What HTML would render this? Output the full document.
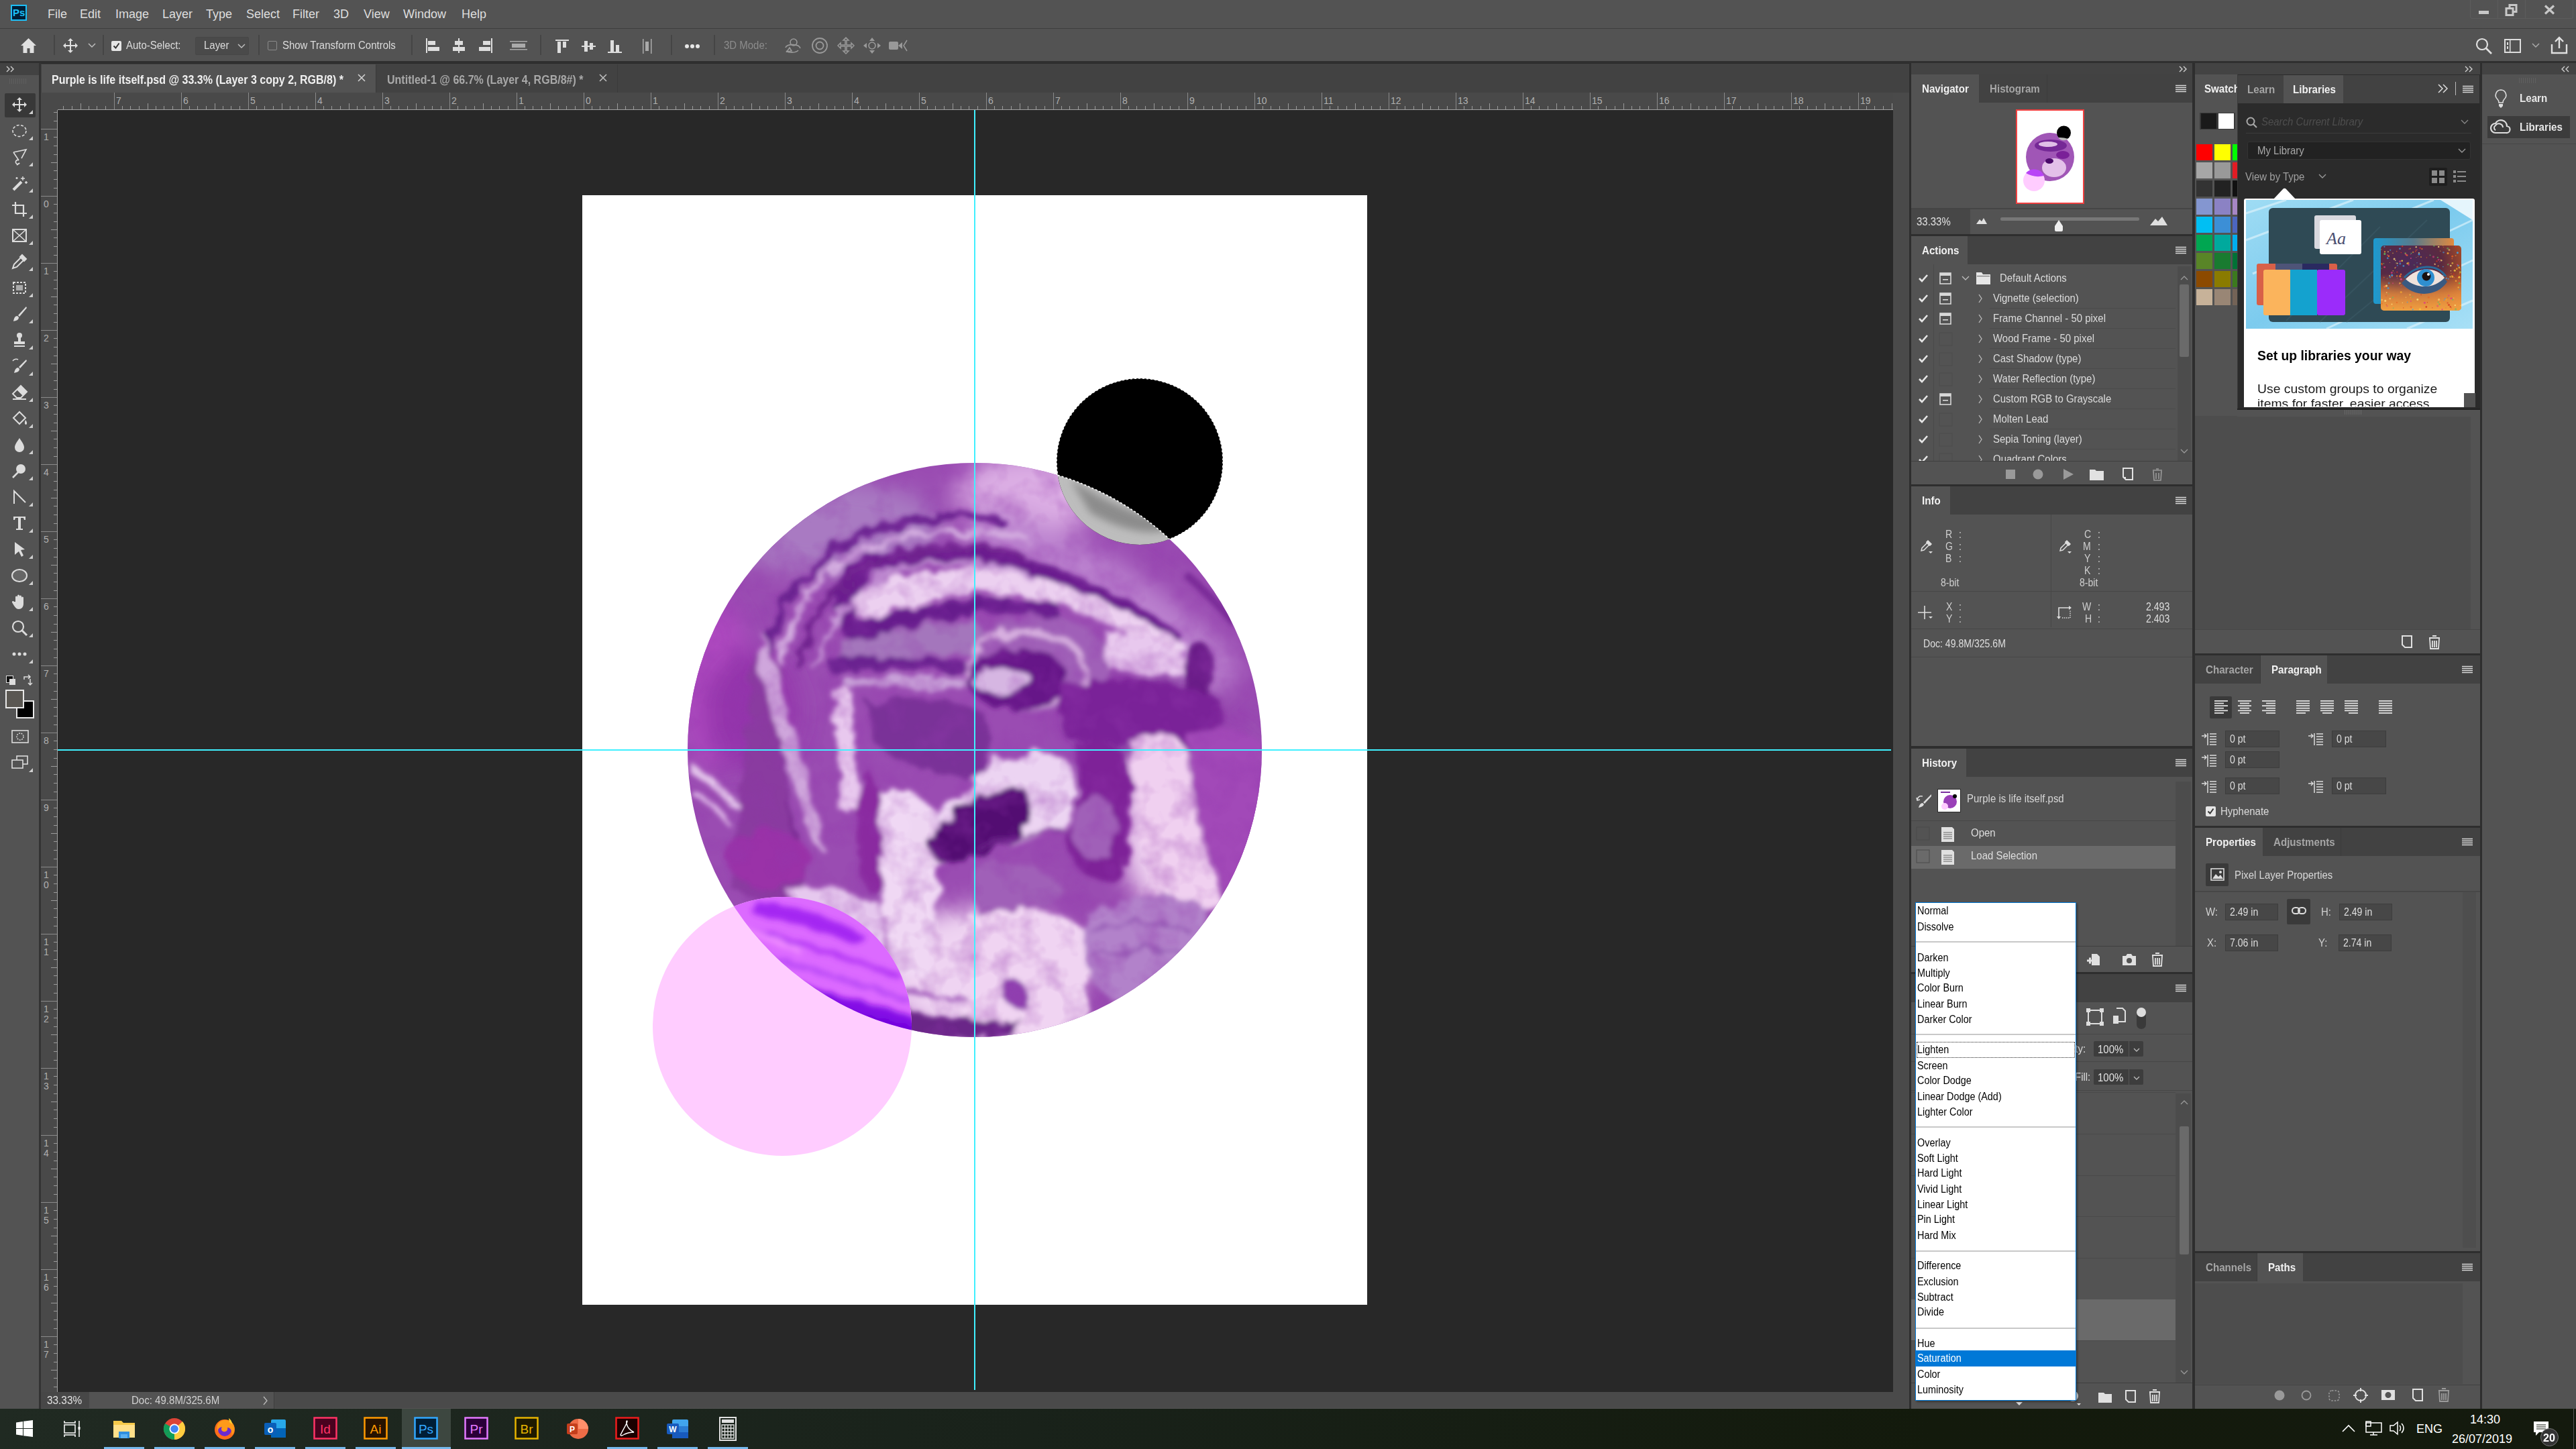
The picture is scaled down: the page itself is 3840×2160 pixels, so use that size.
<!DOCTYPE html><html><head><meta charset="utf-8"><style>
html,body{margin:0;padding:0;width:3840px;height:2160px;overflow:hidden;background:#535353;}
body{position:relative;font-family:"Liberation Sans",sans-serif;}
.a{position:absolute;}
.t{position:absolute;white-space:nowrap;line-height:1;transform-origin:0 0;}
svg{position:absolute;overflow:visible;}
</style></head><body>

<div class="a" style="left:0px;top:0px;width:3840px;height:42px;background:#535353;"></div>
<div class="a" style="left:0px;top:42px;width:3840px;height:1px;background:#3e3e3e;"></div>
<div class="a" style="left:16px;top:7px;width:24px;height:24px;background:#001e36;box-sizing:border-box;border:2px solid #1ec0f8;"></div>
<div class="t" style="left:19px;top:11px;font-size:15px;color:#1ec0f8;font-weight:bold;">Ps</div>
<div class="t" style="left:71px;top:12px;font-size:18px;color:#dedede;font-weight:normal;">File</div>
<div class="t" style="left:119px;top:12px;font-size:18px;color:#dedede;font-weight:normal;">Edit</div>
<div class="t" style="left:172px;top:12px;font-size:18px;color:#dedede;font-weight:normal;">Image</div>
<div class="t" style="left:242px;top:12px;font-size:18px;color:#dedede;font-weight:normal;">Layer</div>
<div class="t" style="left:307px;top:12px;font-size:18px;color:#dedede;font-weight:normal;">Type</div>
<div class="t" style="left:367px;top:12px;font-size:18px;color:#dedede;font-weight:normal;">Select</div>
<div class="t" style="left:436px;top:12px;font-size:18px;color:#dedede;font-weight:normal;">Filter</div>
<div class="t" style="left:497px;top:12px;font-size:18px;color:#dedede;font-weight:normal;">3D</div>
<div class="t" style="left:542px;top:12px;font-size:18px;color:#dedede;font-weight:normal;">View</div>
<div class="t" style="left:601px;top:12px;font-size:18px;color:#dedede;font-weight:normal;">Window</div>
<div class="t" style="left:688px;top:12px;font-size:18px;color:#dedede;font-weight:normal;">Help</div>
<div class="a" style="left:3682px;top:0px;width:154px;height:28px;box-sizing:border-box;border:1px solid #5c5c5c;border-top:none;border-radius:0 0 3px 3px;"></div>
<div class="a" style="left:3723px;top:0px;width:1px;height:27px;background:#5c5c5c;"></div>
<div class="a" style="left:3764px;top:0px;width:1px;height:27px;background:#5c5c5c;"></div>
<div class="a" style="left:3695px;top:16px;width:15px;height:5px;background:#c8c8c8;"></div>
<svg style="left:3734px;top:6px" width="20" height="18"><rect x="7" y="1.5" width="10" height="10" fill="none" stroke="#c8c8c8" stroke-width="3"/><rect x="2" y="6.5" width="10" height="10" fill="#535353" stroke="#c8c8c8" stroke-width="3"/></svg>
<svg style="left:3792px;top:7px" width="18" height="15"><path d="M2 1.5L15 13.5M15 1.5L2 13.5" stroke="#c8c8c8" stroke-width="3.2"/></svg>
<div class="a" style="left:0px;top:43px;width:3840px;height:48px;background:#535353;"></div>
<div class="a" style="left:0px;top:91px;width:3840px;height:3px;background:#2f2f2f;"></div>
<svg style="left:30px;top:56px" width="25" height="24"><path d="M12.5 1L1 12h3.5v11h6v-7h4v7h6V12H24z" fill="#e0e0e0"/></svg>
<div class="a" style="left:80px;top:52px;width:2px;height:30px;background:#454545;"></div>
<svg style="left:93px;top:56px" width="24" height="24"><path d="M12 1l-4 4h3v6H5V8l-4 4 4 4v-3h6v6H8l4 4 4-4h-3v-6h6v3l4-4-4-4v3h-6V5h3z" fill="#e0e0e0"/></svg>
<svg style="left:131px;top:64px" width="12" height="8"><path d="M1 1l5 5 5-5" fill="none" stroke="#bdbdbd" stroke-width="1.5"/></svg>
<div class="a" style="left:153px;top:52px;width:2px;height:30px;background:#454545;"></div>
<div class="a" style="left:166px;top:61px;width:15px;height:15px;background:#e6e6e6;border-radius:2px;"></div>
<svg style="left:168px;top:63px" width="11" height="11"><path d="M1.5 5.5l3 3 5-7" fill="none" stroke="#333" stroke-width="2"/></svg>
<div class="t" style="left:188px;top:59px;font-size:17px;color:#dcdcdc;font-weight:normal;transform:scaleX(0.88);">Auto-Select:</div>
<div class="a" style="left:291px;top:55px;width:80px;height:27px;background:#4a4a4a;border-radius:2px;box-sizing:border-box;border:1px solid #474747;"></div>
<div class="t" style="left:304px;top:59px;font-size:17px;color:#dcdcdc;font-weight:normal;transform:scaleX(0.88);">Layer</div>
<svg style="left:354px;top:65px" width="12" height="8"><path d="M1 1l5 5 5-5" fill="none" stroke="#bdbdbd" stroke-width="1.5"/></svg>
<div class="a" style="left:385px;top:52px;width:2px;height:30px;background:#454545;"></div>
<div class="a" style="left:399px;top:61px;width:14px;height:14px;box-sizing:border-box;border:1px solid #8a8a8a;border-radius:2px;"></div>
<div class="t" style="left:421px;top:59px;font-size:17px;color:#dcdcdc;font-weight:normal;transform:scaleX(0.88);">Show Transform Controls</div>
<div class="a" style="left:613px;top:52px;width:2px;height:30px;background:#454545;"></div>
<svg style="left:634px;top:56px" width="24" height="24"><rect x="1" y="1" width="2" height="22" fill="#ddd"/><rect x="4" y="5" width="11" height="6" fill="#ddd"/><rect x="4" y="14" width="17" height="6" fill="#ddd"/></svg>
<svg style="left:672px;top:56px" width="24" height="24"><rect x="11" y="1" width="2" height="22" fill="#ddd"/><rect x="6" y="5" width="12" height="6" fill="#ddd"/><rect x="3" y="14" width="18" height="6" fill="#ddd"/></svg>
<svg style="left:711px;top:56px" width="24" height="24"><rect x="21" y="1" width="2" height="22" fill="#ddd"/><rect x="9" y="5" width="11" height="6" fill="#ddd"/><rect x="3" y="14" width="17" height="6" fill="#ddd"/></svg>
<svg style="left:760px;top:60px" width="28" height="16"><rect x="0" y="1" width="26" height="1.5" fill="#aaa"/><rect x="3" y="5" width="20" height="6" fill="#aaa"/><rect x="0" y="13" width="26" height="1.5" fill="#aaa"/></svg>
<div class="a" style="left:805px;top:52px;width:2px;height:30px;background:#454545;"></div>
<svg style="left:828px;top:58px" width="22" height="22"><rect x="0" y="1" width="20" height="2" fill="#ddd"/><rect x="3" y="4" width="5" height="17" fill="#ddd"/><rect x="11" y="4" width="5" height="9" fill="#ddd"/></svg>
<svg style="left:867px;top:58px" width="22" height="22"><rect x="0" y="10" width="21" height="2" fill="#ddd"/><rect x="4" y="3" width="5" height="16" fill="#ddd"/><rect x="12" y="6" width="5" height="10" fill="#ddd"/></svg>
<svg style="left:906px;top:58px" width="22" height="22"><rect x="0" y="19" width="21" height="2" fill="#ddd"/><rect x="4" y="2" width="5" height="17" fill="#ddd"/><rect x="12" y="9" width="5" height="10" fill="#ddd"/></svg>
<svg style="left:958px;top:57px" width="14" height="24"><rect x="0" y="1" width="1.5" height="22" fill="#aaa"/><rect x="4" y="5" width="5" height="14" fill="#aaa"/><rect x="12" y="1" width="1.5" height="22" fill="#aaa"/></svg>
<div class="a" style="left:1000px;top:52px;width:2px;height:30px;background:#454545;"></div>
<div class="a" style="left:1021px;top:66px;width:6px;height:6px;background:#e6e6e6;border-radius:50%;"></div>
<div class="a" style="left:1029px;top:66px;width:6px;height:6px;background:#e6e6e6;border-radius:50%;"></div>
<div class="a" style="left:1037px;top:66px;width:6px;height:6px;background:#e6e6e6;border-radius:50%;"></div>
<div class="a" style="left:1064px;top:52px;width:2px;height:30px;background:#454545;"></div>
<div class="t" style="left:1079px;top:59px;font-size:17px;color:#8c8c8c;font-weight:normal;transform:scaleX(0.88);">3D Mode:</div>
<svg style="left:1168px;top:55px" width="28" height="26"><circle cx="15" cy="8" r="5" fill="none" stroke="#999" stroke-width="1.6"/><path d="M3 16c2-6 20-6 22 1M5 22l4-6 3 5z M22 20c-4 4-14 4-18 1" fill="none" stroke="#999" stroke-width="1.6"/></svg>
<svg style="left:1209px;top:55px" width="26" height="26"><circle cx="13" cy="13" r="11" fill="none" stroke="#999" stroke-width="1.8"/><circle cx="13" cy="13" r="5.5" fill="none" stroke="#999" stroke-width="1.8"/></svg>
<svg style="left:1248px;top:55px" width="26" height="26"><path d="M13 1l-4 4h3v7H5V9l-4 4 4 4v-3h7v7H9l4 4 4-4h-3v-7h7v3l4-4-4-4v3h-7V5h3z" fill="none" stroke="#999" stroke-width="1.5"/></svg>
<svg style="left:1286px;top:55px" width="28" height="26"><path d="M14 1l-4 5h8zM14 25l-4-5h8zM1 13l5-4v8zM27 13l-5-4v8z" fill="#999"/><circle cx="14" cy="13" r="5" fill="none" stroke="#999" stroke-width="1.6"/></svg>
<svg style="left:1325px;top:58px" width="28" height="20"><rect x="0" y="4" width="14" height="12" rx="2" fill="#999"/><path d="M14 10l6-5v10z" fill="#999"/><path d="M27 2l-5 8 5 8" fill="none" stroke="#999" stroke-width="1.5"/></svg>
<svg style="left:3690px;top:56px" width="26" height="26"><circle cx="10" cy="10" r="8" fill="none" stroke="#e0e0e0" stroke-width="2.2"/><path d="M16 16l8 8" stroke="#e0e0e0" stroke-width="2.6"/></svg>
<svg style="left:3733px;top:58px" width="26" height="22"><rect x="1" y="1" width="23" height="19" fill="none" stroke="#ddd" stroke-width="2"/><rect x="4" y="5" width="2" height="4" fill="#ddd"/><rect x="4" y="11" width="2" height="4" fill="#ddd"/><rect x="8" y="1" width="1.5" height="19" fill="#ddd"/></svg>
<svg style="left:3774px;top:64px" width="12" height="8"><path d="M1 1l5 5 5-5" fill="none" stroke="#aaa" stroke-width="1.5"/></svg>
<svg style="left:3802px;top:54px" width="26" height="27"><path d="M2 12v13h22V12" fill="none" stroke="#e0e0e0" stroke-width="2.4"/><path d="M13 18V3M7 8l6-6 6 6" fill="none" stroke="#e0e0e0" stroke-width="2.4"/></svg>
<div class="a" style="left:0px;top:94px;width:58px;height:2006px;background:#535353;"></div>
<div class="a" style="left:0px;top:94px;width:58px;height:18px;background:#424242;"></div>
<svg style="left:9px;top:98px" width="14" height="10"><path d="M1 1l4 4-4 4M7 1l4 4-4 4" fill="none" stroke="#d0d0d0" stroke-width="1.4"/></svg>
<div class="a" style="left:14px;top:117px;width:1px;height:8px;background:#5f5f5f;"></div>
<div class="a" style="left:17px;top:117px;width:1px;height:8px;background:#5f5f5f;"></div>
<div class="a" style="left:20px;top:117px;width:1px;height:8px;background:#5f5f5f;"></div>
<div class="a" style="left:23px;top:117px;width:1px;height:8px;background:#5f5f5f;"></div>
<div class="a" style="left:26px;top:117px;width:1px;height:8px;background:#5f5f5f;"></div>
<div class="a" style="left:29px;top:117px;width:1px;height:8px;background:#5f5f5f;"></div>
<div class="a" style="left:32px;top:117px;width:1px;height:8px;background:#5f5f5f;"></div>
<div class="a" style="left:35px;top:117px;width:1px;height:8px;background:#5f5f5f;"></div>
<div class="a" style="left:38px;top:117px;width:1px;height:8px;background:#5f5f5f;"></div>
<div class="a" style="left:58px;top:94px;width:3px;height:2006px;background:#333333;"></div>
<div class="a" style="left:7px;top:139px;width:46px;height:36px;background:#383838;border-radius:2px;"></div>
<svg style="left:17px;top:144px" width="24" height="24"><path d="M12 1l-4 4h3v6H5V8l-4 4 4 4v-3h6v6H8l4 4 4-4h-3v-6h6v3l4-4-4-4v3h-6V5h3z" fill="#dcdcdc"/></svg>
<svg style="left:43px;top:164px" width="6" height="6"><path d="M6 0V6H0z" fill="#cfcfcf"/></svg>
<svg style="left:17px;top:183px" width="24" height="24"><ellipse cx="12" cy="12" rx="10" ry="8.5" fill="none" stroke="#dcdcdc" stroke-width="1.6" stroke-dasharray="4 2.5"/></svg>
<svg style="left:43px;top:203px" width="6" height="6"><path d="M6 0V6H0z" fill="#cfcfcf"/></svg>
<svg style="left:17px;top:222px" width="24" height="24"><path d="M3 5l19-4-7 13M3 5l8 12M11 17a3 3 0 1 0 1 4l-4 3" fill="none" stroke="#dcdcdc" stroke-width="1.6"/></svg>
<svg style="left:43px;top:242px" width="6" height="6"><path d="M6 0V6H0z" fill="#cfcfcf"/></svg>
<svg style="left:17px;top:261px" width="24" height="24"><path d="M3 22l12-12" stroke="#dcdcdc" stroke-width="4"/><path d="M17 2v6M14 5h6M22 9v4M20 11h4M8 3v3M6.5 4.5h3" stroke="#dcdcdc" stroke-width="1.5"/></svg>
<svg style="left:43px;top:281px" width="6" height="6"><path d="M6 0V6H0z" fill="#cfcfcf"/></svg>
<svg style="left:17px;top:300px" width="24" height="24"><path d="M6 1v17h17M1 6h17v17" fill="none" stroke="#dcdcdc" stroke-width="2.2"/></svg>
<svg style="left:43px;top:320px" width="6" height="6"><path d="M6 0V6H0z" fill="#cfcfcf"/></svg>
<svg style="left:17px;top:339px" width="24" height="24"><rect x="2" y="3" width="20" height="18" fill="none" stroke="#dcdcdc" stroke-width="2"/><path d="M2 3l20 18M22 3L2 21" stroke="#dcdcdc" stroke-width="1.6"/></svg>
<svg style="left:43px;top:359px" width="6" height="6"><path d="M6 0V6H0z" fill="#cfcfcf"/></svg>
<svg style="left:17px;top:378px" width="24" height="24"><path d="M16 2l6 6-3 3-6-6zM14 6L4 16l-2 6 6-2 10-10" fill="none" stroke="#dcdcdc" stroke-width="2"/><path d="M16 2l6 6-3 3-6-6z" fill="#dcdcdc"/></svg>
<svg style="left:43px;top:398px" width="6" height="6"><path d="M6 0V6H0z" fill="#cfcfcf"/></svg>
<svg style="left:17px;top:417px" width="24" height="24"><rect x="3" y="4" width="18" height="16" fill="none" stroke="#dcdcdc" stroke-width="2" stroke-dasharray="3 2"/><rect x="7" y="8" width="10" height="8" fill="#aaa"/></svg>
<svg style="left:43px;top:437px" width="6" height="6"><path d="M6 0V6H0z" fill="#cfcfcf"/></svg>
<svg style="left:17px;top:456px" width="24" height="24"><path d="M22 1L10 14l2 2L23 3z" fill="#dcdcdc"/><path d="M9 15c-4 0-5 3-6 8 4-1 8-2 8-6z" fill="#dcdcdc"/></svg>
<svg style="left:43px;top:476px" width="6" height="6"><path d="M6 0V6H0z" fill="#cfcfcf"/></svg>
<svg style="left:17px;top:495px" width="24" height="24"><circle cx="12" cy="5" r="4" fill="#dcdcdc"/><path d="M10 8h4v6h6v4H4v-4h6z M4 20h16v2H4z" fill="#dcdcdc"/></svg>
<svg style="left:43px;top:515px" width="6" height="6"><path d="M6 0V6H0z" fill="#cfcfcf"/></svg>
<svg style="left:17px;top:534px" width="24" height="24"><path d="M22 2L11 13l2 2L23 4z" fill="#dcdcdc"/><path d="M10 14c-3 0-5 3-6 8 4-1 8-2 8-6z" fill="#dcdcdc"/><path d="M2 4a6 6 0 0 1 8-2" fill="none" stroke="#dcdcdc" stroke-width="1.5"/></svg>
<svg style="left:43px;top:554px" width="6" height="6"><path d="M6 0V6H0z" fill="#cfcfcf"/></svg>
<svg style="left:17px;top:573px" width="24" height="24"><path d="M14 2l9 9-9 9H8l-6-6z" fill="none" stroke="#dcdcdc" stroke-width="2"/><path d="M14 2l9 9-6 6-9-9z" fill="#dcdcdc"/><path d="M2 22h20" stroke="#dcdcdc" stroke-width="2"/></svg>
<svg style="left:43px;top:593px" width="6" height="6"><path d="M6 0V6H0z" fill="#cfcfcf"/></svg>
<svg style="left:17px;top:612px" width="24" height="24"><path d="M3 11l9-9 9 9-9 9z" fill="none" stroke="#dcdcdc" stroke-width="2"/><path d="M21 14c2 3 3 5 1 7-2 0-3-2-1-7z" fill="#dcdcdc"/></svg>
<svg style="left:43px;top:632px" width="6" height="6"><path d="M6 0V6H0z" fill="#cfcfcf"/></svg>
<svg style="left:17px;top:651px" width="24" height="24"><path d="M12 2c4 6 7 10 7 14a7 7 0 0 1-14 0c0-4 3-8 7-14z" fill="#dcdcdc"/></svg>
<svg style="left:43px;top:671px" width="6" height="6"><path d="M6 0V6H0z" fill="#cfcfcf"/></svg>
<svg style="left:17px;top:690px" width="24" height="24"><circle cx="14" cy="9" r="7" fill="#dcdcdc"/><path d="M10 14L2 22" stroke="#dcdcdc" stroke-width="2.5"/></svg>
<svg style="left:43px;top:710px" width="6" height="6"><path d="M6 0V6H0z" fill="#cfcfcf"/></svg>
<svg style="left:17px;top:729px" width="24" height="24"><path d="M4 22V3l17 17" fill="none" stroke="#dcdcdc" stroke-width="2"/></svg>
<svg style="left:43px;top:749px" width="6" height="6"><path d="M6 0V6H0z" fill="#cfcfcf"/></svg>
<svg style="left:17px;top:768px" width="24" height="24"><path d="M3 2h18v5h-2l-1-3h-4v16h3v2H7v-2h3V4H6L5 7H3z" fill="#dcdcdc"/></svg>
<svg style="left:43px;top:788px" width="6" height="6"><path d="M6 0V6H0z" fill="#cfcfcf"/></svg>
<svg style="left:17px;top:807px" width="24" height="24"><path d="M5 1l15 11-6 1 4 8-3 2-4-8-6 5z" fill="#dcdcdc"/></svg>
<svg style="left:43px;top:827px" width="6" height="6"><path d="M6 0V6H0z" fill="#cfcfcf"/></svg>
<svg style="left:17px;top:846px" width="24" height="24"><ellipse cx="12" cy="12" rx="11" ry="9" fill="#666" stroke="#dcdcdc" stroke-width="2"/></svg>
<svg style="left:43px;top:866px" width="6" height="6"><path d="M6 0V6H0z" fill="#cfcfcf"/></svg>
<svg style="left:17px;top:885px" width="24" height="24"><path d="M6 12V5a1.5 1.5 0 0 1 3 0v6V3a1.5 1.5 0 0 1 3 0v8V4a1.5 1.5 0 0 1 3 0v8V6a1.5 1.5 0 0 1 3 0v9c0 5-3 8-7 8-3 0-5-2-7-5l-3-5a1.5 1.5 0 0 1 3-1z" fill="#dcdcdc"/></svg>
<svg style="left:43px;top:905px" width="6" height="6"><path d="M6 0V6H0z" fill="#cfcfcf"/></svg>
<svg style="left:17px;top:924px" width="24" height="24"><circle cx="10" cy="10" r="8" fill="none" stroke="#dcdcdc" stroke-width="2.2"/><path d="M15 15l8 8" stroke="#dcdcdc" stroke-width="3"/></svg>
<svg style="left:43px;top:944px" width="6" height="6"><path d="M6 0V6H0z" fill="#cfcfcf"/></svg>
<svg style="left:17px;top:963px" width="24" height="24"><circle cx="4" cy="12" r="2.5" fill="#dcdcdc"/><circle cx="12" cy="12" r="2.5" fill="#dcdcdc"/><circle cx="20" cy="12" r="2.5" fill="#dcdcdc"/></svg>
<svg style="left:43px;top:983px" width="6" height="6"><path d="M6 0V6H0z" fill="#cfcfcf"/></svg>
<div class="a" style="left:9px;top:1007px;width:9px;height:9px;background:#111;border:1px solid #ddd;"></div>
<div class="a" style="left:14px;top:1012px;width:9px;height:9px;background:#ddd;"></div>
<svg style="left:33px;top:1006px" width="16" height="16"><path d="M3 7V3h9M9 0l3 3-3 3M12 6v9M9 12l3 3 3-3" fill="none" stroke="#dcdcdc" stroke-width="1.5"/></svg>
<div class="a" style="left:24px;top:1044px;width:27px;height:27px;background:#000;box-sizing:border-box;border:2px solid #e8e8e8;"></div>
<div class="a" style="left:8px;top:1028px;width:28px;height:28px;background:#5a5752;box-sizing:border-box;border:2px solid #e8e8e8;"></div>
<svg style="left:17px;top:1088px" width="26" height="20"><rect x="1" y="1" width="24" height="18" fill="none" stroke="#dcdcdc" stroke-width="1.6"/><circle cx="13" cy="10" r="5" fill="none" stroke="#dcdcdc" stroke-width="1.4" stroke-dasharray="2 1.5"/></svg>
<svg style="left:17px;top:1126px" width="26" height="22"><rect x="8" y="1" width="16" height="12" fill="none" stroke="#dcdcdc" stroke-width="1.6"/><rect x="1" y="7" width="16" height="12" fill="#535353" stroke="#dcdcdc" stroke-width="1.6"/></svg>
<svg style="left:43px;top:1145px" width="6" height="6"><path d="M6 0V6H0z" fill="#cfcfcf"/></svg>
<div class="a" style="left:61px;top:94px;width:2785px;height:1px;background:#2a2a2a;"></div>
<div class="a" style="left:61px;top:95px;width:2785px;height:43px;background:#424242;"></div>
<div class="a" style="left:62px;top:96px;width:498px;height:42px;background:#535353;"></div>
<div class="t" style="left:77px;top:110px;font-size:18px;color:#f0f0f0;font-weight:bold;transform:scaleX(0.89);">Purple is life itself.psd @ 33.3% (Layer 3 copy 2, RGB/8) *</div>
<svg style="left:533px;top:110px" width="12" height="12"><path d="M1 1l10 10M11 1L1 11" stroke="#d0d0d0" stroke-width="1.6"/></svg>
<div class="a" style="left:560px;top:96px;width:1px;height:42px;background:#3a3a3a;"></div>
<div class="t" style="left:577px;top:110px;font-size:18px;color:#a8a8a8;font-weight:bold;transform:scaleX(0.89);">Untitled-1 @ 66.7% (Layer 4, RGB/8#) *</div>
<svg style="left:893px;top:110px" width="12" height="12"><path d="M1 1l10 10M11 1L1 11" stroke="#bdbdbd" stroke-width="1.6"/></svg>
<div class="a" style="left:920px;top:96px;width:1px;height:42px;background:#3a3a3a;"></div>
<div class="a" style="left:61px;top:138px;width:2761px;height:26px;background:#494949;"></div>
<div class="a" style="left:61px;top:164px;width:25px;height:1911px;background:#494949;"></div>
<div class="a" style="left:86px;top:163px;width:2736px;height:1px;background:#a0a0a0;"></div>
<div class="a" style="left:85px;top:164px;width:1px;height:1911px;background:#a0a0a0;"></div>
<svg style="left:86px;top:138px" width="2736" height="26"><rect x="8" y="20" width="1" height="5" fill="#9a9a9a"/><rect x="21" y="20" width="1" height="5" fill="#9a9a9a"/><rect x="34" y="16" width="1" height="9" fill="#9a9a9a"/><rect x="46" y="20" width="1" height="5" fill="#9a9a9a"/><rect x="58" y="20" width="1" height="5" fill="#9a9a9a"/><rect x="71" y="20" width="1" height="5" fill="#9a9a9a"/><rect x="84" y="0" width="1" height="25" fill="#8a8a8a"/><rect x="96" y="20" width="1" height="5" fill="#9a9a9a"/><rect x="108" y="20" width="1" height="5" fill="#9a9a9a"/><rect x="121" y="20" width="1" height="5" fill="#9a9a9a"/><rect x="134" y="16" width="1" height="9" fill="#9a9a9a"/><rect x="146" y="20" width="1" height="5" fill="#9a9a9a"/><rect x="158" y="20" width="1" height="5" fill="#9a9a9a"/><rect x="171" y="20" width="1" height="5" fill="#9a9a9a"/><rect x="184" y="0" width="1" height="25" fill="#8a8a8a"/><rect x="196" y="20" width="1" height="5" fill="#9a9a9a"/><rect x="208" y="20" width="1" height="5" fill="#9a9a9a"/><rect x="221" y="20" width="1" height="5" fill="#9a9a9a"/><rect x="234" y="16" width="1" height="9" fill="#9a9a9a"/><rect x="246" y="20" width="1" height="5" fill="#9a9a9a"/><rect x="258" y="20" width="1" height="5" fill="#9a9a9a"/><rect x="271" y="20" width="1" height="5" fill="#9a9a9a"/><rect x="284" y="0" width="1" height="25" fill="#8a8a8a"/><rect x="296" y="20" width="1" height="5" fill="#9a9a9a"/><rect x="308" y="20" width="1" height="5" fill="#9a9a9a"/><rect x="321" y="20" width="1" height="5" fill="#9a9a9a"/><rect x="334" y="16" width="1" height="9" fill="#9a9a9a"/><rect x="346" y="20" width="1" height="5" fill="#9a9a9a"/><rect x="358" y="20" width="1" height="5" fill="#9a9a9a"/><rect x="371" y="20" width="1" height="5" fill="#9a9a9a"/><rect x="384" y="0" width="1" height="25" fill="#8a8a8a"/><rect x="396" y="20" width="1" height="5" fill="#9a9a9a"/><rect x="408" y="20" width="1" height="5" fill="#9a9a9a"/><rect x="421" y="20" width="1" height="5" fill="#9a9a9a"/><rect x="434" y="16" width="1" height="9" fill="#9a9a9a"/><rect x="446" y="20" width="1" height="5" fill="#9a9a9a"/><rect x="458" y="20" width="1" height="5" fill="#9a9a9a"/><rect x="471" y="20" width="1" height="5" fill="#9a9a9a"/><rect x="484" y="0" width="1" height="25" fill="#8a8a8a"/><rect x="496" y="20" width="1" height="5" fill="#9a9a9a"/><rect x="508" y="20" width="1" height="5" fill="#9a9a9a"/><rect x="521" y="20" width="1" height="5" fill="#9a9a9a"/><rect x="534" y="16" width="1" height="9" fill="#9a9a9a"/><rect x="546" y="20" width="1" height="5" fill="#9a9a9a"/><rect x="558" y="20" width="1" height="5" fill="#9a9a9a"/><rect x="571" y="20" width="1" height="5" fill="#9a9a9a"/><rect x="584" y="0" width="1" height="25" fill="#8a8a8a"/><rect x="596" y="20" width="1" height="5" fill="#9a9a9a"/><rect x="608" y="20" width="1" height="5" fill="#9a9a9a"/><rect x="621" y="20" width="1" height="5" fill="#9a9a9a"/><rect x="634" y="16" width="1" height="9" fill="#9a9a9a"/><rect x="646" y="20" width="1" height="5" fill="#9a9a9a"/><rect x="658" y="20" width="1" height="5" fill="#9a9a9a"/><rect x="671" y="20" width="1" height="5" fill="#9a9a9a"/><rect x="684" y="0" width="1" height="25" fill="#8a8a8a"/><rect x="696" y="20" width="1" height="5" fill="#9a9a9a"/><rect x="708" y="20" width="1" height="5" fill="#9a9a9a"/><rect x="721" y="20" width="1" height="5" fill="#9a9a9a"/><rect x="734" y="16" width="1" height="9" fill="#9a9a9a"/><rect x="746" y="20" width="1" height="5" fill="#9a9a9a"/><rect x="758" y="20" width="1" height="5" fill="#9a9a9a"/><rect x="771" y="20" width="1" height="5" fill="#9a9a9a"/><rect x="784" y="0" width="1" height="25" fill="#8a8a8a"/><rect x="796" y="20" width="1" height="5" fill="#9a9a9a"/><rect x="808" y="20" width="1" height="5" fill="#9a9a9a"/><rect x="821" y="20" width="1" height="5" fill="#9a9a9a"/><rect x="834" y="16" width="1" height="9" fill="#9a9a9a"/><rect x="846" y="20" width="1" height="5" fill="#9a9a9a"/><rect x="858" y="20" width="1" height="5" fill="#9a9a9a"/><rect x="871" y="20" width="1" height="5" fill="#9a9a9a"/><rect x="884" y="0" width="1" height="25" fill="#8a8a8a"/><rect x="896" y="20" width="1" height="5" fill="#9a9a9a"/><rect x="908" y="20" width="1" height="5" fill="#9a9a9a"/><rect x="921" y="20" width="1" height="5" fill="#9a9a9a"/><rect x="934" y="16" width="1" height="9" fill="#9a9a9a"/><rect x="946" y="20" width="1" height="5" fill="#9a9a9a"/><rect x="958" y="20" width="1" height="5" fill="#9a9a9a"/><rect x="971" y="20" width="1" height="5" fill="#9a9a9a"/><rect x="984" y="0" width="1" height="25" fill="#8a8a8a"/><rect x="996" y="20" width="1" height="5" fill="#9a9a9a"/><rect x="1008" y="20" width="1" height="5" fill="#9a9a9a"/><rect x="1021" y="20" width="1" height="5" fill="#9a9a9a"/><rect x="1034" y="16" width="1" height="9" fill="#9a9a9a"/><rect x="1046" y="20" width="1" height="5" fill="#9a9a9a"/><rect x="1058" y="20" width="1" height="5" fill="#9a9a9a"/><rect x="1071" y="20" width="1" height="5" fill="#9a9a9a"/><rect x="1084" y="0" width="1" height="25" fill="#8a8a8a"/><rect x="1096" y="20" width="1" height="5" fill="#9a9a9a"/><rect x="1108" y="20" width="1" height="5" fill="#9a9a9a"/><rect x="1121" y="20" width="1" height="5" fill="#9a9a9a"/><rect x="1134" y="16" width="1" height="9" fill="#9a9a9a"/><rect x="1146" y="20" width="1" height="5" fill="#9a9a9a"/><rect x="1158" y="20" width="1" height="5" fill="#9a9a9a"/><rect x="1171" y="20" width="1" height="5" fill="#9a9a9a"/><rect x="1184" y="0" width="1" height="25" fill="#8a8a8a"/><rect x="1196" y="20" width="1" height="5" fill="#9a9a9a"/><rect x="1208" y="20" width="1" height="5" fill="#9a9a9a"/><rect x="1221" y="20" width="1" height="5" fill="#9a9a9a"/><rect x="1234" y="16" width="1" height="9" fill="#9a9a9a"/><rect x="1246" y="20" width="1" height="5" fill="#9a9a9a"/><rect x="1258" y="20" width="1" height="5" fill="#9a9a9a"/><rect x="1271" y="20" width="1" height="5" fill="#9a9a9a"/><rect x="1284" y="0" width="1" height="25" fill="#8a8a8a"/><rect x="1296" y="20" width="1" height="5" fill="#9a9a9a"/><rect x="1308" y="20" width="1" height="5" fill="#9a9a9a"/><rect x="1321" y="20" width="1" height="5" fill="#9a9a9a"/><rect x="1334" y="16" width="1" height="9" fill="#9a9a9a"/><rect x="1346" y="20" width="1" height="5" fill="#9a9a9a"/><rect x="1358" y="20" width="1" height="5" fill="#9a9a9a"/><rect x="1371" y="20" width="1" height="5" fill="#9a9a9a"/><rect x="1384" y="0" width="1" height="25" fill="#8a8a8a"/><rect x="1396" y="20" width="1" height="5" fill="#9a9a9a"/><rect x="1408" y="20" width="1" height="5" fill="#9a9a9a"/><rect x="1421" y="20" width="1" height="5" fill="#9a9a9a"/><rect x="1434" y="16" width="1" height="9" fill="#9a9a9a"/><rect x="1446" y="20" width="1" height="5" fill="#9a9a9a"/><rect x="1458" y="20" width="1" height="5" fill="#9a9a9a"/><rect x="1471" y="20" width="1" height="5" fill="#9a9a9a"/><rect x="1484" y="0" width="1" height="25" fill="#8a8a8a"/><rect x="1496" y="20" width="1" height="5" fill="#9a9a9a"/><rect x="1508" y="20" width="1" height="5" fill="#9a9a9a"/><rect x="1521" y="20" width="1" height="5" fill="#9a9a9a"/><rect x="1534" y="16" width="1" height="9" fill="#9a9a9a"/><rect x="1546" y="20" width="1" height="5" fill="#9a9a9a"/><rect x="1558" y="20" width="1" height="5" fill="#9a9a9a"/><rect x="1571" y="20" width="1" height="5" fill="#9a9a9a"/><rect x="1584" y="0" width="1" height="25" fill="#8a8a8a"/><rect x="1596" y="20" width="1" height="5" fill="#9a9a9a"/><rect x="1608" y="20" width="1" height="5" fill="#9a9a9a"/><rect x="1621" y="20" width="1" height="5" fill="#9a9a9a"/><rect x="1634" y="16" width="1" height="9" fill="#9a9a9a"/><rect x="1646" y="20" width="1" height="5" fill="#9a9a9a"/><rect x="1658" y="20" width="1" height="5" fill="#9a9a9a"/><rect x="1671" y="20" width="1" height="5" fill="#9a9a9a"/><rect x="1684" y="0" width="1" height="25" fill="#8a8a8a"/><rect x="1696" y="20" width="1" height="5" fill="#9a9a9a"/><rect x="1708" y="20" width="1" height="5" fill="#9a9a9a"/><rect x="1721" y="20" width="1" height="5" fill="#9a9a9a"/><rect x="1734" y="16" width="1" height="9" fill="#9a9a9a"/><rect x="1746" y="20" width="1" height="5" fill="#9a9a9a"/><rect x="1758" y="20" width="1" height="5" fill="#9a9a9a"/><rect x="1771" y="20" width="1" height="5" fill="#9a9a9a"/><rect x="1784" y="0" width="1" height="25" fill="#8a8a8a"/><rect x="1796" y="20" width="1" height="5" fill="#9a9a9a"/><rect x="1808" y="20" width="1" height="5" fill="#9a9a9a"/><rect x="1821" y="20" width="1" height="5" fill="#9a9a9a"/><rect x="1834" y="16" width="1" height="9" fill="#9a9a9a"/><rect x="1846" y="20" width="1" height="5" fill="#9a9a9a"/><rect x="1858" y="20" width="1" height="5" fill="#9a9a9a"/><rect x="1871" y="20" width="1" height="5" fill="#9a9a9a"/><rect x="1884" y="0" width="1" height="25" fill="#8a8a8a"/><rect x="1896" y="20" width="1" height="5" fill="#9a9a9a"/><rect x="1908" y="20" width="1" height="5" fill="#9a9a9a"/><rect x="1921" y="20" width="1" height="5" fill="#9a9a9a"/><rect x="1934" y="16" width="1" height="9" fill="#9a9a9a"/><rect x="1946" y="20" width="1" height="5" fill="#9a9a9a"/><rect x="1958" y="20" width="1" height="5" fill="#9a9a9a"/><rect x="1971" y="20" width="1" height="5" fill="#9a9a9a"/><rect x="1984" y="0" width="1" height="25" fill="#8a8a8a"/><rect x="1996" y="20" width="1" height="5" fill="#9a9a9a"/><rect x="2008" y="20" width="1" height="5" fill="#9a9a9a"/><rect x="2021" y="20" width="1" height="5" fill="#9a9a9a"/><rect x="2034" y="16" width="1" height="9" fill="#9a9a9a"/><rect x="2046" y="20" width="1" height="5" fill="#9a9a9a"/><rect x="2058" y="20" width="1" height="5" fill="#9a9a9a"/><rect x="2071" y="20" width="1" height="5" fill="#9a9a9a"/><rect x="2084" y="0" width="1" height="25" fill="#8a8a8a"/><rect x="2096" y="20" width="1" height="5" fill="#9a9a9a"/><rect x="2108" y="20" width="1" height="5" fill="#9a9a9a"/><rect x="2121" y="20" width="1" height="5" fill="#9a9a9a"/><rect x="2134" y="16" width="1" height="9" fill="#9a9a9a"/><rect x="2146" y="20" width="1" height="5" fill="#9a9a9a"/><rect x="2158" y="20" width="1" height="5" fill="#9a9a9a"/><rect x="2171" y="20" width="1" height="5" fill="#9a9a9a"/><rect x="2184" y="0" width="1" height="25" fill="#8a8a8a"/><rect x="2196" y="20" width="1" height="5" fill="#9a9a9a"/><rect x="2208" y="20" width="1" height="5" fill="#9a9a9a"/><rect x="2221" y="20" width="1" height="5" fill="#9a9a9a"/><rect x="2234" y="16" width="1" height="9" fill="#9a9a9a"/><rect x="2246" y="20" width="1" height="5" fill="#9a9a9a"/><rect x="2258" y="20" width="1" height="5" fill="#9a9a9a"/><rect x="2271" y="20" width="1" height="5" fill="#9a9a9a"/><rect x="2284" y="0" width="1" height="25" fill="#8a8a8a"/><rect x="2296" y="20" width="1" height="5" fill="#9a9a9a"/><rect x="2308" y="20" width="1" height="5" fill="#9a9a9a"/><rect x="2321" y="20" width="1" height="5" fill="#9a9a9a"/><rect x="2334" y="16" width="1" height="9" fill="#9a9a9a"/><rect x="2346" y="20" width="1" height="5" fill="#9a9a9a"/><rect x="2358" y="20" width="1" height="5" fill="#9a9a9a"/><rect x="2371" y="20" width="1" height="5" fill="#9a9a9a"/><rect x="2384" y="0" width="1" height="25" fill="#8a8a8a"/><rect x="2396" y="20" width="1" height="5" fill="#9a9a9a"/><rect x="2408" y="20" width="1" height="5" fill="#9a9a9a"/><rect x="2421" y="20" width="1" height="5" fill="#9a9a9a"/><rect x="2434" y="16" width="1" height="9" fill="#9a9a9a"/><rect x="2446" y="20" width="1" height="5" fill="#9a9a9a"/><rect x="2458" y="20" width="1" height="5" fill="#9a9a9a"/><rect x="2471" y="20" width="1" height="5" fill="#9a9a9a"/><rect x="2484" y="0" width="1" height="25" fill="#8a8a8a"/><rect x="2496" y="20" width="1" height="5" fill="#9a9a9a"/><rect x="2508" y="20" width="1" height="5" fill="#9a9a9a"/><rect x="2521" y="20" width="1" height="5" fill="#9a9a9a"/><rect x="2534" y="16" width="1" height="9" fill="#9a9a9a"/><rect x="2546" y="20" width="1" height="5" fill="#9a9a9a"/><rect x="2558" y="20" width="1" height="5" fill="#9a9a9a"/><rect x="2571" y="20" width="1" height="5" fill="#9a9a9a"/><rect x="2584" y="0" width="1" height="25" fill="#8a8a8a"/><rect x="2596" y="20" width="1" height="5" fill="#9a9a9a"/><rect x="2608" y="20" width="1" height="5" fill="#9a9a9a"/><rect x="2621" y="20" width="1" height="5" fill="#9a9a9a"/><rect x="2634" y="16" width="1" height="9" fill="#9a9a9a"/><rect x="2646" y="20" width="1" height="5" fill="#9a9a9a"/><rect x="2658" y="20" width="1" height="5" fill="#9a9a9a"/><rect x="2671" y="20" width="1" height="5" fill="#9a9a9a"/><rect x="2684" y="0" width="1" height="25" fill="#8a8a8a"/><rect x="2696" y="20" width="1" height="5" fill="#9a9a9a"/><rect x="2708" y="20" width="1" height="5" fill="#9a9a9a"/><rect x="2721" y="20" width="1" height="5" fill="#9a9a9a"/><rect x="2734" y="16" width="1" height="9" fill="#9a9a9a"/><text x="87" y="17" font-size="14" fill="#b0b0b0" font-family="Liberation Sans">7</text><text x="187" y="17" font-size="14" fill="#b0b0b0" font-family="Liberation Sans">6</text><text x="287" y="17" font-size="14" fill="#b0b0b0" font-family="Liberation Sans">5</text><text x="387" y="17" font-size="14" fill="#b0b0b0" font-family="Liberation Sans">4</text><text x="487" y="17" font-size="14" fill="#b0b0b0" font-family="Liberation Sans">3</text><text x="587" y="17" font-size="14" fill="#b0b0b0" font-family="Liberation Sans">2</text><text x="687" y="17" font-size="14" fill="#b0b0b0" font-family="Liberation Sans">1</text><text x="787" y="17" font-size="14" fill="#b0b0b0" font-family="Liberation Sans">0</text><text x="887" y="17" font-size="14" fill="#b0b0b0" font-family="Liberation Sans">1</text><text x="987" y="17" font-size="14" fill="#b0b0b0" font-family="Liberation Sans">2</text><text x="1087" y="17" font-size="14" fill="#b0b0b0" font-family="Liberation Sans">3</text><text x="1187" y="17" font-size="14" fill="#b0b0b0" font-family="Liberation Sans">4</text><text x="1287" y="17" font-size="14" fill="#b0b0b0" font-family="Liberation Sans">5</text><text x="1387" y="17" font-size="14" fill="#b0b0b0" font-family="Liberation Sans">6</text><text x="1487" y="17" font-size="14" fill="#b0b0b0" font-family="Liberation Sans">7</text><text x="1587" y="17" font-size="14" fill="#b0b0b0" font-family="Liberation Sans">8</text><text x="1687" y="17" font-size="14" fill="#b0b0b0" font-family="Liberation Sans">9</text><text x="1787" y="17" font-size="14" fill="#b0b0b0" font-family="Liberation Sans">10</text><text x="1887" y="17" font-size="14" fill="#b0b0b0" font-family="Liberation Sans">11</text><text x="1987" y="17" font-size="14" fill="#b0b0b0" font-family="Liberation Sans">12</text><text x="2087" y="17" font-size="14" fill="#b0b0b0" font-family="Liberation Sans">13</text><text x="2187" y="17" font-size="14" fill="#b0b0b0" font-family="Liberation Sans">14</text><text x="2287" y="17" font-size="14" fill="#b0b0b0" font-family="Liberation Sans">15</text><text x="2387" y="17" font-size="14" fill="#b0b0b0" font-family="Liberation Sans">16</text><text x="2487" y="17" font-size="14" fill="#b0b0b0" font-family="Liberation Sans">17</text><text x="2587" y="17" font-size="14" fill="#b0b0b0" font-family="Liberation Sans">18</text><text x="2687" y="17" font-size="14" fill="#b0b0b0" font-family="Liberation Sans">19</text></svg>
<svg style="left:61px;top:164px" width="25" height="1911"><rect x="19" y="3" width="5" height="1" fill="#9a9a9a"/><rect x="19" y="16" width="5" height="1" fill="#9a9a9a"/><rect x="0" y="28" width="24" height="1" fill="#8a8a8a"/><rect x="19" y="40" width="5" height="1" fill="#9a9a9a"/><rect x="19" y="53" width="5" height="1" fill="#9a9a9a"/><rect x="19" y="66" width="5" height="1" fill="#9a9a9a"/><rect x="15" y="78" width="9" height="1" fill="#9a9a9a"/><rect x="19" y="90" width="5" height="1" fill="#9a9a9a"/><rect x="19" y="103" width="5" height="1" fill="#9a9a9a"/><rect x="19" y="116" width="5" height="1" fill="#9a9a9a"/><rect x="0" y="128" width="24" height="1" fill="#8a8a8a"/><rect x="19" y="140" width="5" height="1" fill="#9a9a9a"/><rect x="19" y="153" width="5" height="1" fill="#9a9a9a"/><rect x="19" y="166" width="5" height="1" fill="#9a9a9a"/><rect x="15" y="178" width="9" height="1" fill="#9a9a9a"/><rect x="19" y="190" width="5" height="1" fill="#9a9a9a"/><rect x="19" y="203" width="5" height="1" fill="#9a9a9a"/><rect x="19" y="216" width="5" height="1" fill="#9a9a9a"/><rect x="0" y="228" width="24" height="1" fill="#8a8a8a"/><rect x="19" y="240" width="5" height="1" fill="#9a9a9a"/><rect x="19" y="253" width="5" height="1" fill="#9a9a9a"/><rect x="19" y="266" width="5" height="1" fill="#9a9a9a"/><rect x="15" y="278" width="9" height="1" fill="#9a9a9a"/><rect x="19" y="290" width="5" height="1" fill="#9a9a9a"/><rect x="19" y="303" width="5" height="1" fill="#9a9a9a"/><rect x="19" y="316" width="5" height="1" fill="#9a9a9a"/><rect x="0" y="328" width="24" height="1" fill="#8a8a8a"/><rect x="19" y="340" width="5" height="1" fill="#9a9a9a"/><rect x="19" y="353" width="5" height="1" fill="#9a9a9a"/><rect x="19" y="366" width="5" height="1" fill="#9a9a9a"/><rect x="15" y="378" width="9" height="1" fill="#9a9a9a"/><rect x="19" y="390" width="5" height="1" fill="#9a9a9a"/><rect x="19" y="403" width="5" height="1" fill="#9a9a9a"/><rect x="19" y="416" width="5" height="1" fill="#9a9a9a"/><rect x="0" y="428" width="24" height="1" fill="#8a8a8a"/><rect x="19" y="440" width="5" height="1" fill="#9a9a9a"/><rect x="19" y="453" width="5" height="1" fill="#9a9a9a"/><rect x="19" y="466" width="5" height="1" fill="#9a9a9a"/><rect x="15" y="478" width="9" height="1" fill="#9a9a9a"/><rect x="19" y="490" width="5" height="1" fill="#9a9a9a"/><rect x="19" y="503" width="5" height="1" fill="#9a9a9a"/><rect x="19" y="516" width="5" height="1" fill="#9a9a9a"/><rect x="0" y="528" width="24" height="1" fill="#8a8a8a"/><rect x="19" y="540" width="5" height="1" fill="#9a9a9a"/><rect x="19" y="553" width="5" height="1" fill="#9a9a9a"/><rect x="19" y="566" width="5" height="1" fill="#9a9a9a"/><rect x="15" y="578" width="9" height="1" fill="#9a9a9a"/><rect x="19" y="590" width="5" height="1" fill="#9a9a9a"/><rect x="19" y="603" width="5" height="1" fill="#9a9a9a"/><rect x="19" y="616" width="5" height="1" fill="#9a9a9a"/><rect x="0" y="628" width="24" height="1" fill="#8a8a8a"/><rect x="19" y="640" width="5" height="1" fill="#9a9a9a"/><rect x="19" y="653" width="5" height="1" fill="#9a9a9a"/><rect x="19" y="666" width="5" height="1" fill="#9a9a9a"/><rect x="15" y="678" width="9" height="1" fill="#9a9a9a"/><rect x="19" y="690" width="5" height="1" fill="#9a9a9a"/><rect x="19" y="703" width="5" height="1" fill="#9a9a9a"/><rect x="19" y="716" width="5" height="1" fill="#9a9a9a"/><rect x="0" y="728" width="24" height="1" fill="#8a8a8a"/><rect x="19" y="740" width="5" height="1" fill="#9a9a9a"/><rect x="19" y="753" width="5" height="1" fill="#9a9a9a"/><rect x="19" y="766" width="5" height="1" fill="#9a9a9a"/><rect x="15" y="778" width="9" height="1" fill="#9a9a9a"/><rect x="19" y="790" width="5" height="1" fill="#9a9a9a"/><rect x="19" y="803" width="5" height="1" fill="#9a9a9a"/><rect x="19" y="816" width="5" height="1" fill="#9a9a9a"/><rect x="0" y="828" width="24" height="1" fill="#8a8a8a"/><rect x="19" y="840" width="5" height="1" fill="#9a9a9a"/><rect x="19" y="853" width="5" height="1" fill="#9a9a9a"/><rect x="19" y="866" width="5" height="1" fill="#9a9a9a"/><rect x="15" y="878" width="9" height="1" fill="#9a9a9a"/><rect x="19" y="890" width="5" height="1" fill="#9a9a9a"/><rect x="19" y="903" width="5" height="1" fill="#9a9a9a"/><rect x="19" y="916" width="5" height="1" fill="#9a9a9a"/><rect x="0" y="928" width="24" height="1" fill="#8a8a8a"/><rect x="19" y="940" width="5" height="1" fill="#9a9a9a"/><rect x="19" y="953" width="5" height="1" fill="#9a9a9a"/><rect x="19" y="966" width="5" height="1" fill="#9a9a9a"/><rect x="15" y="978" width="9" height="1" fill="#9a9a9a"/><rect x="19" y="990" width="5" height="1" fill="#9a9a9a"/><rect x="19" y="1003" width="5" height="1" fill="#9a9a9a"/><rect x="19" y="1016" width="5" height="1" fill="#9a9a9a"/><rect x="0" y="1028" width="24" height="1" fill="#8a8a8a"/><rect x="19" y="1040" width="5" height="1" fill="#9a9a9a"/><rect x="19" y="1053" width="5" height="1" fill="#9a9a9a"/><rect x="19" y="1066" width="5" height="1" fill="#9a9a9a"/><rect x="15" y="1078" width="9" height="1" fill="#9a9a9a"/><rect x="19" y="1090" width="5" height="1" fill="#9a9a9a"/><rect x="19" y="1103" width="5" height="1" fill="#9a9a9a"/><rect x="19" y="1116" width="5" height="1" fill="#9a9a9a"/><rect x="0" y="1128" width="24" height="1" fill="#8a8a8a"/><rect x="19" y="1140" width="5" height="1" fill="#9a9a9a"/><rect x="19" y="1153" width="5" height="1" fill="#9a9a9a"/><rect x="19" y="1166" width="5" height="1" fill="#9a9a9a"/><rect x="15" y="1178" width="9" height="1" fill="#9a9a9a"/><rect x="19" y="1190" width="5" height="1" fill="#9a9a9a"/><rect x="19" y="1203" width="5" height="1" fill="#9a9a9a"/><rect x="19" y="1216" width="5" height="1" fill="#9a9a9a"/><rect x="0" y="1228" width="24" height="1" fill="#8a8a8a"/><rect x="19" y="1240" width="5" height="1" fill="#9a9a9a"/><rect x="19" y="1253" width="5" height="1" fill="#9a9a9a"/><rect x="19" y="1266" width="5" height="1" fill="#9a9a9a"/><rect x="15" y="1278" width="9" height="1" fill="#9a9a9a"/><rect x="19" y="1290" width="5" height="1" fill="#9a9a9a"/><rect x="19" y="1303" width="5" height="1" fill="#9a9a9a"/><rect x="19" y="1316" width="5" height="1" fill="#9a9a9a"/><rect x="0" y="1328" width="24" height="1" fill="#8a8a8a"/><rect x="19" y="1340" width="5" height="1" fill="#9a9a9a"/><rect x="19" y="1353" width="5" height="1" fill="#9a9a9a"/><rect x="19" y="1366" width="5" height="1" fill="#9a9a9a"/><rect x="15" y="1378" width="9" height="1" fill="#9a9a9a"/><rect x="19" y="1390" width="5" height="1" fill="#9a9a9a"/><rect x="19" y="1403" width="5" height="1" fill="#9a9a9a"/><rect x="19" y="1416" width="5" height="1" fill="#9a9a9a"/><rect x="0" y="1428" width="24" height="1" fill="#8a8a8a"/><rect x="19" y="1440" width="5" height="1" fill="#9a9a9a"/><rect x="19" y="1453" width="5" height="1" fill="#9a9a9a"/><rect x="19" y="1466" width="5" height="1" fill="#9a9a9a"/><rect x="15" y="1478" width="9" height="1" fill="#9a9a9a"/><rect x="19" y="1490" width="5" height="1" fill="#9a9a9a"/><rect x="19" y="1503" width="5" height="1" fill="#9a9a9a"/><rect x="19" y="1516" width="5" height="1" fill="#9a9a9a"/><rect x="0" y="1528" width="24" height="1" fill="#8a8a8a"/><rect x="19" y="1540" width="5" height="1" fill="#9a9a9a"/><rect x="19" y="1553" width="5" height="1" fill="#9a9a9a"/><rect x="19" y="1566" width="5" height="1" fill="#9a9a9a"/><rect x="15" y="1578" width="9" height="1" fill="#9a9a9a"/><rect x="19" y="1590" width="5" height="1" fill="#9a9a9a"/><rect x="19" y="1603" width="5" height="1" fill="#9a9a9a"/><rect x="19" y="1616" width="5" height="1" fill="#9a9a9a"/><rect x="0" y="1628" width="24" height="1" fill="#8a8a8a"/><rect x="19" y="1640" width="5" height="1" fill="#9a9a9a"/><rect x="19" y="1653" width="5" height="1" fill="#9a9a9a"/><rect x="19" y="1666" width="5" height="1" fill="#9a9a9a"/><rect x="15" y="1678" width="9" height="1" fill="#9a9a9a"/><rect x="19" y="1690" width="5" height="1" fill="#9a9a9a"/><rect x="19" y="1703" width="5" height="1" fill="#9a9a9a"/><rect x="19" y="1716" width="5" height="1" fill="#9a9a9a"/><rect x="0" y="1728" width="24" height="1" fill="#8a8a8a"/><rect x="19" y="1740" width="5" height="1" fill="#9a9a9a"/><rect x="19" y="1753" width="5" height="1" fill="#9a9a9a"/><rect x="19" y="1766" width="5" height="1" fill="#9a9a9a"/><rect x="15" y="1778" width="9" height="1" fill="#9a9a9a"/><rect x="19" y="1790" width="5" height="1" fill="#9a9a9a"/><rect x="19" y="1803" width="5" height="1" fill="#9a9a9a"/><rect x="19" y="1816" width="5" height="1" fill="#9a9a9a"/><rect x="0" y="1828" width="24" height="1" fill="#8a8a8a"/><rect x="19" y="1840" width="5" height="1" fill="#9a9a9a"/><rect x="19" y="1853" width="5" height="1" fill="#9a9a9a"/><rect x="19" y="1866" width="5" height="1" fill="#9a9a9a"/><rect x="15" y="1878" width="9" height="1" fill="#9a9a9a"/><rect x="19" y="1890" width="5" height="1" fill="#9a9a9a"/><rect x="19" y="1903" width="5" height="1" fill="#9a9a9a"/><text x="4" y="45" font-size="14" fill="#b0b0b0" font-family="Liberation Sans">1</text><text x="4" y="145" font-size="14" fill="#b0b0b0" font-family="Liberation Sans">0</text><text x="4" y="245" font-size="14" fill="#b0b0b0" font-family="Liberation Sans">1</text><text x="4" y="345" font-size="14" fill="#b0b0b0" font-family="Liberation Sans">2</text><text x="4" y="445" font-size="14" fill="#b0b0b0" font-family="Liberation Sans">3</text><text x="4" y="545" font-size="14" fill="#b0b0b0" font-family="Liberation Sans">4</text><text x="4" y="645" font-size="14" fill="#b0b0b0" font-family="Liberation Sans">5</text><text x="4" y="745" font-size="14" fill="#b0b0b0" font-family="Liberation Sans">6</text><text x="4" y="845" font-size="14" fill="#b0b0b0" font-family="Liberation Sans">7</text><text x="4" y="945" font-size="14" fill="#b0b0b0" font-family="Liberation Sans">8</text><text x="4" y="1045" font-size="14" fill="#b0b0b0" font-family="Liberation Sans">9</text><text x="4" y="1145" font-size="14" fill="#b0b0b0" font-family="Liberation Sans">1</text><text x="4" y="1160" font-size="14" fill="#b0b0b0" font-family="Liberation Sans">0</text><text x="4" y="1245" font-size="14" fill="#b0b0b0" font-family="Liberation Sans">1</text><text x="4" y="1260" font-size="14" fill="#b0b0b0" font-family="Liberation Sans">1</text><text x="4" y="1345" font-size="14" fill="#b0b0b0" font-family="Liberation Sans">1</text><text x="4" y="1360" font-size="14" fill="#b0b0b0" font-family="Liberation Sans">2</text><text x="4" y="1445" font-size="14" fill="#b0b0b0" font-family="Liberation Sans">1</text><text x="4" y="1460" font-size="14" fill="#b0b0b0" font-family="Liberation Sans">3</text><text x="4" y="1545" font-size="14" fill="#b0b0b0" font-family="Liberation Sans">1</text><text x="4" y="1560" font-size="14" fill="#b0b0b0" font-family="Liberation Sans">4</text><text x="4" y="1645" font-size="14" fill="#b0b0b0" font-family="Liberation Sans">1</text><text x="4" y="1660" font-size="14" fill="#b0b0b0" font-family="Liberation Sans">5</text><text x="4" y="1745" font-size="14" fill="#b0b0b0" font-family="Liberation Sans">1</text><text x="4" y="1760" font-size="14" fill="#b0b0b0" font-family="Liberation Sans">6</text><text x="4" y="1845" font-size="14" fill="#b0b0b0" font-family="Liberation Sans">1</text><text x="4" y="1860" font-size="14" fill="#b0b0b0" font-family="Liberation Sans">7</text></svg>
<div class="a" style="left:86px;top:164px;width:2736px;height:1911px;background:#282828;"></div>
<div class="a" style="left:2822px;top:138px;width:24px;height:1961px;background:#4a4a4a;"></div>
<div class="a" style="left:2846px;top:94px;width:3px;height:2006px;background:#2e2e2e;"></div>
<div class="a" style="left:61px;top:2075px;width:2761px;height:24px;background:#4a4a4a;"></div>
<div class="a" style="left:61px;top:2075px;width:72px;height:24px;background:#474747;"></div>
<div class="a" style="left:133px;top:2075px;width:275px;height:24px;background:#535353;"></div>
<div class="t" style="left:70px;top:2080px;font-size:16px;color:#e0e0e0;font-weight:normal;transform:scaleX(0.96);">33.33%</div>
<div class="t" style="left:196px;top:2080px;font-size:16px;color:#d0d0d0;font-weight:normal;transform:scaleX(0.94);">Doc: 49.8M/325.6M</div>
<svg style="left:392px;top:2081px" width="8" height="14"><path d="M1 1l5 6-5 6" fill="none" stroke="#bbb" stroke-width="1.3"/></svg>
<div class="a" style="left:408px;top:2075px;width:1px;height:25px;background:#3e3e3e;"></div>
<div class="a" style="left:868px;top:291px;width:1170px;height:1654px;background:#ffffff;"></div>
<svg style="left:1025px;top:690px" width="856" height="856">
<defs>
<clipPath id="cpc"><circle cx="428" cy="428" r="428"/></clipPath>
<filter id="bl1" x="-50%" y="-50%" width="200%" height="200%"><feGaussianBlur stdDeviation="18"/></filter>
<filter id="bl2" x="-50%" y="-50%" width="200%" height="200%"><feTurbulence type="fractalNoise" baseFrequency="0.04" numOctaves="2" seed="3" result="n"/><feDisplacementMap in="SourceGraphic" in2="n" scale="26" result="d"/><feGaussianBlur in="d" stdDeviation="3.5"/></filter>
<filter id="mot" x="0" y="0" width="100%" height="100%"><feTurbulence type="fractalNoise" baseFrequency="0.025" numOctaves="3" seed="11" result="t"/><feColorMatrix in="t" type="matrix" values="0 0 0 0 0.29  0 0 0 0 0.04  0 0 0 0 0.42  0 0 0 -2.2 1.25" result="c"/><feComposite in="c" in2="SourceGraphic" operator="in"/></filter>
</defs>
<g clip-path="url(#cpc)">
<rect x="0" y="0" width="856" height="856" fill="#9a4cb2"/>
<g filter="url(#bl1)">
<ellipse cx="210" cy="95" rx="170" ry="70" fill="#a97ac2"/>
<ellipse cx="510" cy="45" rx="110" ry="60" fill="#dcaee4"/>
<path d="M430 90 C560 130 700 210 800 330" stroke="#bb82cf" stroke-width="70" fill="none"/>
<ellipse cx="40" cy="330" rx="55" ry="130" fill="#ae48c0"/>
<ellipse cx="95" cy="370" rx="70" ry="90" fill="#9434ac"/>
<ellipse cx="700" cy="540" rx="55" ry="120" fill="#eed0f0"/>
<ellipse cx="440" cy="760" rx="150" ry="100" fill="#efd4f2"/>
<ellipse cx="800" cy="520" rx="60" ry="120" fill="#a248b8"/>
<ellipse cx="680" cy="380" rx="110" ry="55" fill="#7a2098"/>
</g>
<g filter="url(#bl2)">
<path d="M236 262 C212 220 212 162 262 140 C322 118 430 122 520 148 C600 172 680 216 732 252 L724 268 C670 236 600 196 520 172 C430 148 330 144 280 160 C248 180 248 220 258 258Z" fill="#6a1e8e"/>
<path d="M248 213 C248 190 262 180 290 175 C340 165 400 158 428 155 C500 152 600 190 740 268 L732 290 C620 232 520 192 428 192 C380 200 320 216 280 230 C260 235 248 228 248 213Z" fill="#ecd0f0"/>
<path d="M238 246 C300 226 380 206 428 202 C470 199 520 206 562 216 L556 234 C500 224 460 222 428 224 C380 230 300 252 242 268Z" fill="#661a8c"/>
<path d="M232 268 C300 250 380 238 430 236 C445 250 448 270 440 282 C360 284 290 292 226 302Z" fill="#a476bc"/>
<path d="M208 292 C280 284 360 287 440 298 L440 318 C360 308 280 302 212 312Z" fill="#6a2090"/>
<path d="M236 322 C300 314 380 317 440 327 L440 342 C380 334 300 332 236 337Z" fill="#c8a0d8"/>
<path d="M120 350 C125 450 140 540 165 615" stroke="#74268e" stroke-width="30" fill="none"/>
<path d="M116 312 C130 180 220 100 358 82 C400 78 440 80 470 88" stroke="#6a2090" stroke-width="14" fill="none"/>
<path d="M140 300 C155 190 230 120 360 105 C420 100 470 104 510 115" stroke="#d4aee0" stroke-width="9" fill="none"/>
<path d="M165 305 C180 210 250 140 360 128 C420 122 470 128 500 140" stroke="#70228e" stroke-width="10" fill="none"/>
<path d="M190 310 C205 230 265 165 355 150 C420 145 470 152 515 172" stroke="#c89ad8" stroke-width="7" fill="none"/>
<ellipse cx="525" cy="300" rx="105" ry="72" fill="#a060b8"/>
<ellipse cx="505" cy="308" rx="88" ry="56" fill="none" stroke="#d8b0e0" stroke-width="9"/>
<ellipse cx="492" cy="322" rx="74" ry="46" fill="#661888"/>
<ellipse cx="470" cy="326" rx="46" ry="18" fill="#d6b6e2"/>
<path d="M618 250 C680 248 732 268 742 300 C732 322 680 318 628 306Z" fill="#e8c8ee"/>
<ellipse cx="762" cy="312" rx="24" ry="46" fill="#6a1a88"/>
<path d="M560 335 C620 315 720 322 792 352 C805 390 800 420 780 430 C700 420 620 420 565 410 C550 380 550 350 560 335Z" fill="#7a2098"/>
<path d="M738 162 C770 190 800 220 815 240" stroke="#7a2a98" stroke-width="12" fill="none"/>
<path d="M95 290 C115 280 132 290 135 310 C138 420 150 560 177 640 C140 660 80 650 60 630 C70 580 86 480 95 290Z" fill="#8a3aa0"/>
<ellipse cx="120" cy="590" rx="62" ry="42" fill="#9a30a8"/>
<path d="M8 458 C30 470 55 490 74 515" stroke="#e2c2ea" stroke-width="12" fill="none"/>
<path d="M5 490 C25 500 45 515 60 535" stroke="#dcb4e6" stroke-width="8" fill="none"/>
<path d="M114 255 C130 300 142 360 168 430 C182 480 196 530 204 576 C194 580 182 562 172 520 C152 460 124 380 106 300Z" fill="#cfa6dc"/>
<path d="M230 340 C236 400 240 460 242 520" stroke="#e8c8ee" stroke-width="26" fill="none"/>
<path d="M270 455 C290 490 298 560 290 640 C270 660 255 620 252 560 C250 510 258 470 270 455Z" fill="#8a2aa0"/>
<path d="M266 354 C320 346 390 352 440 372 C460 410 450 450 430 470 C380 472 320 450 280 420Z" fill="#7a3098"/>
<path d="M282 487 C320 480 350 500 372 520 C378 600 372 700 362 760 L302 760 C296 700 290 600 282 487Z" fill="#f0d8f4"/>
<path d="M430 470 C450 442 490 430 540 432 C570 435 580 460 576 500 C572 530 560 545 540 552 C500 562 460 568 430 578 C410 585 380 600 360 610 L350 540 C380 520 410 495 430 470Z" fill="#ecd4f2"/>
<path d="M325 515 C350 510 368 530 369 560 L369 610 C350 600 330 580 325 515Z" fill="#eed6f2"/>
<path d="M362 560 C380 525 430 492 480 482 C512 478 518 510 508 535 C490 568 430 592 388 598 C368 598 358 580 362 560Z" fill="#520e72"/>
<path d="M430 570 C470 562 520 552 565 545" stroke="#7a2a98" stroke-width="5" fill="none"/>
<path d="M578 420 C600 410 640 415 655 440 C665 500 662 580 642 622 C600 632 570 602 565 562 C585 520 590 460 578 420Z" fill="#7e2498"/>
<ellipse cx="608" cy="545" rx="34" ry="48" fill="#a060b8"/>
<path d="M662 420 C680 400 730 400 742 425 C752 500 772 580 795 650 C770 680 720 675 702 662 C682 600 662 500 662 420Z" fill="#f0d0f0"/>
<path d="M745 405 C780 390 840 395 856 420 L856 640 L800 640 C775 560 755 500 745 405Z" fill="#a248b8"/>
<path d="M580 692 C620 642 722 632 772 662 C782 722 742 792 682 814 C622 814 580 762 580 692Z" fill="#b282ca"/>
<path d="M600 700 C640 680 700 680 750 700M610 740 C650 720 710 720 745 735" stroke="#9a60b8" stroke-width="6" fill="none"/>
<path d="M428 600 C480 590 540 600 562 640 C540 672 480 666 428 672Z" fill="#a060b8"/>
<path d="M420 675 C470 660 550 662 585 690 C600 750 600 810 590 856 L420 856 C410 800 405 720 420 675Z" fill="#f0d4f2"/>
<path d="M470 768 C490 764 512 780 508 800 C500 816 480 810 472 800Z" fill="#9040b0"/>
<path d="M320 812 C380 830 440 836 500 828 L480 856 L330 856Z" fill="#6a2888"/>
<path d="M300 780 C340 790 380 800 420 800" stroke="#a868c0" stroke-width="6" fill="none"/>
<path d="M150 640 C200 630 250 640 290 660 C300 700 290 730 260 740 C220 720 180 690 150 640Z" fill="#e6c8ee"/>
</g>
<rect x="0" y="0" width="856" height="856" fill="#4a0a6a" filter="url(#mot)" opacity="0.35"/>
</g>
</svg>
<svg style="left:1575px;top:564px" width="248" height="248">
<defs>
<clipPath id="cpb"><circle cx="124" cy="124" r="124"/></clipPath>
<clipPath id="cpp"><circle cx="-122" cy="554" r="428"/></clipPath>
<filter id="bl4"><feGaussianBlur stdDeviation="6"/></filter>
</defs>
<g clip-path="url(#cpb)">
<rect width="248" height="248" fill="#000"/>
<g clip-path="url(#cpp)">
<rect width="250" height="250" fill="#bdbdbd"/>
<g filter="url(#bl4)"><path d="M20 150 C60 175 110 205 180 215 C160 240 100 230 50 200Z" fill="#8c8c8c"/><path d="M10 120 C40 140 80 160 120 165" stroke="#d0d0d0" stroke-width="10" fill="none"/></g>
</g>
</g>
</svg>
<svg style="left:1573px;top:562px" width="252" height="252">
<defs><mask id="antm"><rect width="300" height="300" fill="#fff"/><circle cx="-120" cy="556" r="427" fill="#000"/></mask></defs>
<g mask="url(#antm)"><circle cx="126" cy="126" r="124" fill="none" stroke="#fff" stroke-width="1.6" stroke-dasharray="3 3"/></g>
<g clip-path="url(#cpb2)"><circle cx="-120" cy="556" r="428" fill="none" stroke="#fff" stroke-width="1.6" stroke-dasharray="3 3"/></g>
<defs><clipPath id="cpb2"><circle cx="126" cy="126" r="124"/></clipPath></defs>
</svg>
<svg style="left:973px;top:1337px" width="386" height="386">
<defs>
<clipPath id="cpk"><circle cx="193" cy="193" r="193"/></clipPath>
<clipPath id="cpp2"><circle cx="480" cy="-219" r="428"/></clipPath>
<filter id="bl5" x="-20%" y="-20%" width="140%" height="140%"><feTurbulence type="fractalNoise" baseFrequency="0.05" numOctaves="2" seed="5" result="n"/><feDisplacementMap in="SourceGraphic" in2="n" scale="14" result="d"/><feGaussianBlur in="d" stdDeviation="4"/></filter>
</defs>
<g clip-path="url(#cpk)">
<rect width="386" height="386" fill="#ffccff"/>
<g clip-path="url(#cpp2)">
<rect width="386" height="386" fill="#dc6aff"/>
<g filter="url(#bl5)">
<path d="M160 8 C225 14 280 35 318 60 L302 72 C250 50 205 36 150 26Z" fill="#a426f2"/>
<path d="M110 40 C190 60 290 90 370 120" stroke="#b036f4" stroke-width="8" fill="none"/>
<path d="M150 85 C230 105 310 130 385 155" stroke="#b848f6" stroke-width="7" fill="none"/>
<path d="M60 25 C120 40 170 60 220 80" stroke="#ee88ff" stroke-width="10" fill="none"/>
<path d="M150 120 C240 148 320 170 400 192" stroke="#8410e6" stroke-width="22" fill="none"/>
<path d="M190 150 C260 172 330 190 400 205" stroke="#7000dc" stroke-width="20" fill="none"/>
</g>
</g>
</g>
</svg>
<div class="a" style="left:1452px;top:164px;width:2px;height:1908px;background:#40f0ff;"></div>
<div class="a" style="left:86px;top:1117px;width:2733px;height:2px;background:#40f0ff;"></div>
<div class="a" style="left:2849px;top:94px;width:419px;height:2006px;background:#535353;"></div>
<div class="a" style="left:3268px;top:94px;width:4px;height:2006px;background:#2e2e2e;"></div>
<div class="a" style="left:3272px;top:94px;width:425px;height:2006px;background:#535353;"></div>
<div class="a" style="left:3697px;top:94px;width:3px;height:2006px;background:#2e2e2e;"></div>
<div class="a" style="left:3700px;top:94px;width:140px;height:2006px;background:#535353;"></div>
<div class="a" style="left:2849px;top:94px;width:419px;height:17px;background:#434343;"></div>
<div class="a" style="left:3272px;top:94px;width:425px;height:17px;background:#434343;"></div>
<div class="a" style="left:3700px;top:94px;width:140px;height:17px;background:#434343;"></div>
<svg style="left:3248px;top:98px" width="13" height="10"><path d="M1 1l4 4-4 4M7 1l4 4-4 4" fill="none" stroke="#d0d0d0" stroke-width="1.4"/></svg>
<svg style="left:3674px;top:98px" width="13" height="10"><path d="M1 1l4 4-4 4M7 1l4 4-4 4" fill="none" stroke="#d0d0d0" stroke-width="1.4"/></svg>
<svg style="left:3818px;top:98px" width="13" height="10"><path d="M5 1L1 5l4 4M11 1L7 5l4 4" fill="none" stroke="#d0d0d0" stroke-width="1.4"/></svg>
<div class="a" style="left:2849px;top:111px;width:419px;height:42px;background:#424242;"></div>
<div class="a" style="left:2849px;top:111px;width:101px;height:42px;background:#535353;"></div>
<div class="t" style="left:2865px;top:124px;font-size:17px;color:#f2f2f2;font-weight:bold;transform:scaleX(0.89);">Navigator</div>
<div class="t" style="left:2966px;top:124px;font-size:17px;color:#a6a6a6;font-weight:bold;transform:scaleX(0.89);">Histogram</div>
<div class="a" style="left:3051px;top:111px;width:1px;height:42px;background:#3b3b3b;"></div>
<svg style="left:3243px;top:126px" width="17" height="13"><path d="M0 1.5h16M0 4.5h16M0 7.5h16M0 10.5h16" stroke="#d8d8d8" stroke-width="1.4"/></svg>
<div class="a" style="left:3005px;top:163px;width:102px;height:141px;background:#ffffff;box-sizing:border-box;border:2px solid #f04040;"></div>
<svg style="left:3007px;top:165px" width="98" height="137">
<defs><clipPath id="nvc"><circle cx="49" cy="69" r="36"/></clipPath></defs>
<g clip-path="url(#nvc)"><rect x="0" y="0" width="98" height="137" fill="#a056b6"/>
<ellipse cx="50" cy="52" rx="24" ry="9" fill="#6a1e8e" opacity="0.8"/>
<ellipse cx="46" cy="50" rx="14" ry="4" fill="#ecd0f0" opacity="0.9"/>
<ellipse cx="55" cy="85" rx="18" ry="14" fill="#efd4f2" opacity="0.85"/>
<ellipse cx="48" cy="75" rx="6" ry="4" fill="#4a0a6a"/>
<ellipse cx="68" cy="66" rx="10" ry="6" fill="#7a2098"/>
</g>
<circle cx="25" cy="104" r="16" fill="#ffccff"/>
<path d="M13 93 A16 16 0 0 1 40 97 A36 36 0 0 1 13 93z" fill="#b844f6"/>
<circle cx="69.5" cy="33" r="10.5" fill="#000"/>
<path d="M61 40 A10.5 10.5 0 0 0 76 42 A36 36 0 0 0 61 40z" fill="#bbb"/>
</svg>
<div class="a" style="left:2849px;top:310px;width:419px;height:2px;background:#454545;"></div>
<div class="a" style="left:2849px;top:312px;width:88px;height:37px;background:#474747;"></div>
<div class="t" style="left:2857px;top:322px;font-size:17px;color:#e0e0e0;font-weight:normal;transform:scaleX(0.88);">33.33%</div>
<svg style="left:2946px;top:325px" width="16" height="9"><path d="M0 9l5-7 3 3 3-5 5 9z" fill="#e0e0e0"/></svg>
<div class="a" style="left:2982px;top:324px;width:207px;height:5px;background:#777777;border-radius:2px;"></div>
<svg style="left:3063px;top:328px" width="12" height="17"><path d="M6 0L0 9v6a2 2 0 0 0 2 2h8a2 2 0 0 0 2-2V9z" fill="#eeeeee"/></svg>
<svg style="left:3205px;top:323px" width="26" height="13"><path d="M0 13l8-10 4 4 6-7 8 13z" fill="#e0e0e0"/></svg>
<div class="a" style="left:2849px;top:349px;width:419px;height:3px;background:#2e2e2e;"></div>
<div class="a" style="left:2849px;top:352px;width:419px;height:42px;background:#424242;"></div>
<div class="a" style="left:2849px;top:352px;width:84px;height:42px;background:#535353;"></div>
<div class="t" style="left:2865px;top:365px;font-size:17px;color:#f2f2f2;font-weight:bold;transform:scaleX(0.89);">Actions</div>
<svg style="left:3243px;top:367px" width="17" height="13"><path d="M0 1.5h16M0 4.5h16M0 7.5h16M0 10.5h16" stroke="#d8d8d8" stroke-width="1.4"/></svg>
<div class="a" style="left:2882px;top:394px;width:1px;height:293px;background:#4a4a4a;"></div>
<svg style="left:2849px;top:397px" width="400" height="290"><path d="M12 18l4 4 8-9" fill="none" stroke="#e6e6e6" stroke-width="2.6"/><rect x="43" y="10" width="16" height="16" fill="none" stroke="#d8d8d8" stroke-width="1.6"/><rect x="43" y="10" width="16" height="4" fill="#d8d8d8"/><rect x="47" y="19" width="8" height="1.6" fill="#d8d8d8"/><path d="M76 15l5 5 5-5" fill="none" stroke="#bbb" stroke-width="1.4"/><path d="M97 9h8l2 3h11v15h-21z" fill="#e6e6e6"/><rect x="98" y="14" width="19" height="1.2" fill="#777"/><path d="M12 48l4 4 8-9" fill="none" stroke="#e6e6e6" stroke-width="2.6"/><rect x="43" y="40" width="16" height="16" fill="none" stroke="#d8d8d8" stroke-width="1.6"/><rect x="43" y="40" width="16" height="4" fill="#d8d8d8"/><rect x="47" y="49" width="8" height="1.6" fill="#d8d8d8"/><path d="M101 42l4 6-4 6" fill="none" stroke="#bbb" stroke-width="1.3"/><rect x="117" y="62" width="277" height="1" fill="#4b4b4b"/><path d="M12 78l4 4 8-9" fill="none" stroke="#e6e6e6" stroke-width="2.6"/><rect x="43" y="70" width="16" height="16" fill="none" stroke="#d8d8d8" stroke-width="1.6"/><rect x="43" y="70" width="16" height="4" fill="#d8d8d8"/><rect x="47" y="79" width="8" height="1.6" fill="#d8d8d8"/><path d="M101 72l4 6-4 6" fill="none" stroke="#bbb" stroke-width="1.3"/><rect x="117" y="92" width="277" height="1" fill="#4b4b4b"/><path d="M12 108l4 4 8-9" fill="none" stroke="#e6e6e6" stroke-width="2.6"/><rect x="42" y="99" width="19" height="19" fill="none" stroke="#4c4c4c" stroke-width="1"/><path d="M101 102l4 6-4 6" fill="none" stroke="#bbb" stroke-width="1.3"/><rect x="117" y="122" width="277" height="1" fill="#4b4b4b"/><path d="M12 138l4 4 8-9" fill="none" stroke="#e6e6e6" stroke-width="2.6"/><rect x="42" y="129" width="19" height="19" fill="none" stroke="#4c4c4c" stroke-width="1"/><path d="M101 132l4 6-4 6" fill="none" stroke="#bbb" stroke-width="1.3"/><rect x="117" y="152" width="277" height="1" fill="#4b4b4b"/><path d="M12 168l4 4 8-9" fill="none" stroke="#e6e6e6" stroke-width="2.6"/><rect x="42" y="159" width="19" height="19" fill="none" stroke="#4c4c4c" stroke-width="1"/><path d="M101 162l4 6-4 6" fill="none" stroke="#bbb" stroke-width="1.3"/><rect x="117" y="182" width="277" height="1" fill="#4b4b4b"/><path d="M12 198l4 4 8-9" fill="none" stroke="#e6e6e6" stroke-width="2.6"/><rect x="43" y="190" width="16" height="16" fill="none" stroke="#d8d8d8" stroke-width="1.6"/><rect x="43" y="190" width="16" height="4" fill="#d8d8d8"/><rect x="47" y="199" width="8" height="1.6" fill="#d8d8d8"/><path d="M101 192l4 6-4 6" fill="none" stroke="#bbb" stroke-width="1.3"/><rect x="117" y="212" width="277" height="1" fill="#4b4b4b"/><path d="M12 228l4 4 8-9" fill="none" stroke="#e6e6e6" stroke-width="2.6"/><rect x="42" y="219" width="19" height="19" fill="none" stroke="#4c4c4c" stroke-width="1"/><path d="M101 222l4 6-4 6" fill="none" stroke="#bbb" stroke-width="1.3"/><rect x="117" y="242" width="277" height="1" fill="#4b4b4b"/><path d="M12 258l4 4 8-9" fill="none" stroke="#e6e6e6" stroke-width="2.6"/><rect x="42" y="249" width="19" height="19" fill="none" stroke="#4c4c4c" stroke-width="1"/><path d="M101 252l4 6-4 6" fill="none" stroke="#bbb" stroke-width="1.3"/><rect x="117" y="272" width="277" height="1" fill="#4b4b4b"/><path d="M12 288l4 4 8-9" fill="none" stroke="#e6e6e6" stroke-width="2.6"/><rect x="42" y="279" width="19" height="19" fill="none" stroke="#4c4c4c" stroke-width="1"/><path d="M101 282l4 6-4 6" fill="none" stroke="#bbb" stroke-width="1.3"/><rect x="117" y="302" width="277" height="1" fill="#4b4b4b"/></svg>
<div class="t" style="left:2981px;top:406px;font-size:17px;color:#dcdcdc;font-weight:normal;transform:scaleX(0.88);">Default Actions</div>
<div class="t" style="left:2971px;top:436px;font-size:17px;color:#dcdcdc;font-weight:normal;transform:scaleX(0.88);">Vignette (selection)</div>
<div class="t" style="left:2971px;top:466px;font-size:17px;color:#dcdcdc;font-weight:normal;transform:scaleX(0.88);">Frame Channel - 50 pixel</div>
<div class="t" style="left:2971px;top:496px;font-size:17px;color:#dcdcdc;font-weight:normal;transform:scaleX(0.88);">Wood Frame - 50 pixel</div>
<div class="t" style="left:2971px;top:526px;font-size:17px;color:#dcdcdc;font-weight:normal;transform:scaleX(0.88);">Cast Shadow (type)</div>
<div class="t" style="left:2971px;top:556px;font-size:17px;color:#dcdcdc;font-weight:normal;transform:scaleX(0.88);">Water Reflection (type)</div>
<div class="t" style="left:2971px;top:586px;font-size:17px;color:#dcdcdc;font-weight:normal;transform:scaleX(0.88);">Custom RGB to Grayscale</div>
<div class="t" style="left:2971px;top:616px;font-size:17px;color:#dcdcdc;font-weight:normal;transform:scaleX(0.88);">Molten Lead</div>
<div class="t" style="left:2971px;top:646px;font-size:17px;color:#dcdcdc;font-weight:normal;transform:scaleX(0.88);">Sepia Toning (layer)</div>
<div class="t" style="left:2971px;top:676px;font-size:17px;color:#dcdcdc;font-weight:normal;transform:scaleX(0.88);">Quadrant Colors</div>
<div class="a" style="left:3246px;top:397px;width:20px;height:290px;background:#4c4c4c;"></div>
<svg style="left:3250px;top:411px" width="12" height="7"><path d="M1 6l5-5 5 5" fill="none" stroke="#999" stroke-width="1.3"/></svg>
<div class="a" style="left:3249px;top:424px;width:14px;height:108px;background:#6a6a6a;border-radius:2px;"></div>
<svg style="left:3250px;top:669px" width="12" height="7"><path d="M1 1l5 5 5-5" fill="none" stroke="#999" stroke-width="1.3"/></svg>
<div class="a" style="left:2849px;top:687px;width:419px;height:1px;background:#3f3f3f;"></div>
<div class="a" style="left:2849px;top:688px;width:419px;height:35px;background:#535353;"></div>
<svg style="left:2995px;top:696px" width="240" height="22">
<rect x="7" y="4" width="14" height="14" fill="#9a9a9a" transform="translate(-12 0)"/>
<circle cx="43" cy="11" r="7.5" fill="#9a9a9a"/>
<path d="M81 3l15 8-15 8z" fill="#9a9a9a"/>
<path d="M120 4h8l2 2h11v14h-21z" fill="#e2e2e2"/>
<path d="M170 2h14v17h-10l-4-4z" fill="none" stroke="#e2e2e2" stroke-width="2"/><path d="M170 15h4v4" fill="#e2e2e2"/>
<path d="M214 5h14M219 3h4M215 6l1 14h10l1-14M219 9v9M223 9v9" fill="none" stroke="#9a9a9a" stroke-width="1.6"/>
</svg>
<div class="a" style="left:2849px;top:722px;width:419px;height:3px;background:#2e2e2e;"></div>
<div class="a" style="left:2849px;top:725px;width:419px;height:42px;background:#424242;"></div>
<div class="a" style="left:2849px;top:725px;width:58px;height:42px;background:#535353;"></div>
<div class="t" style="left:2865px;top:738px;font-size:17px;color:#f2f2f2;font-weight:bold;transform:scaleX(0.89);">Info</div>
<svg style="left:3243px;top:740px" width="17" height="13"><path d="M0 1.5h16M0 4.5h16M0 7.5h16M0 10.5h16" stroke="#d8d8d8" stroke-width="1.4"/></svg>
<div class="a" style="left:3057px;top:767px;width:1px;height:168px;background:#474747;"></div>
<div class="a" style="left:2849px;top:881px;width:419px;height:1px;background:#474747;"></div>
<svg style="left:2860px;top:805px" width="22" height="22"><path d="M14 1l5 5-2 2-1-1-8 8-4 1 1-4 8-8-1-1z" fill="none" stroke="#ddd" stroke-width="1.5"/><path d="M14 1l5 5-3 3-5-5z" fill="#ddd"/><path d="M15 17l3 3 3-3z" fill="#ddd"/></svg>
<svg style="left:3067px;top:805px" width="22" height="22"><path d="M14 1l5 5-2 2-1-1-8 8-4 1 1-4 8-8-1-1z" fill="none" stroke="#ddd" stroke-width="1.5"/><path d="M14 1l5 5-3 3-5-5z" fill="#ddd"/><path d="M15 17l3 3 3-3z" fill="#ddd"/></svg>
<div class="t" style="left:2900px;top:789px;font-size:16px;color:#cfcfcf;font-weight:normal;transform:scaleX(0.88);">R</div>
<div class="t" style="left:2920px;top:789px;font-size:16px;color:#cfcfcf;font-weight:normal;transform:scaleX(0.88);">:</div>
<div class="t" style="left:2900px;top:807px;font-size:16px;color:#cfcfcf;font-weight:normal;transform:scaleX(0.88);">G</div>
<div class="t" style="left:2920px;top:807px;font-size:16px;color:#cfcfcf;font-weight:normal;transform:scaleX(0.88);">:</div>
<div class="t" style="left:2900px;top:825px;font-size:16px;color:#cfcfcf;font-weight:normal;transform:scaleX(0.88);">B</div>
<div class="t" style="left:2920px;top:825px;font-size:16px;color:#cfcfcf;font-weight:normal;transform:scaleX(0.88);">:</div>
<div class="t" style="left:2893px;top:861px;font-size:16px;color:#cfcfcf;font-weight:normal;transform:scaleX(0.88);">8-bit</div>
<div class="t" style="left:3107px;top:789px;font-size:16px;color:#cfcfcf;font-weight:normal;transform:scaleX(0.88);">C</div>
<div class="t" style="left:3127px;top:789px;font-size:16px;color:#cfcfcf;font-weight:normal;transform:scaleX(0.88);">:</div>
<div class="t" style="left:3105px;top:807px;font-size:16px;color:#cfcfcf;font-weight:normal;transform:scaleX(0.88);">M</div>
<div class="t" style="left:3127px;top:807px;font-size:16px;color:#cfcfcf;font-weight:normal;transform:scaleX(0.88);">:</div>
<div class="t" style="left:3107px;top:825px;font-size:16px;color:#cfcfcf;font-weight:normal;transform:scaleX(0.88);">Y</div>
<div class="t" style="left:3127px;top:825px;font-size:16px;color:#cfcfcf;font-weight:normal;transform:scaleX(0.88);">:</div>
<div class="t" style="left:3107px;top:843px;font-size:16px;color:#cfcfcf;font-weight:normal;transform:scaleX(0.88);">K</div>
<div class="t" style="left:3127px;top:843px;font-size:16px;color:#cfcfcf;font-weight:normal;transform:scaleX(0.88);">:</div>
<div class="t" style="left:3100px;top:861px;font-size:16px;color:#cfcfcf;font-weight:normal;transform:scaleX(0.88);">8-bit</div>
<svg style="left:2859px;top:903px" width="24" height="22"><path d="M10 0v20M0 10h20" stroke="#ddd" stroke-width="1.6"/><path d="M16 16h6l-3 3z" fill="#ddd"/></svg>
<div class="t" style="left:2901px;top:897px;font-size:16px;color:#cfcfcf;font-weight:normal;transform:scaleX(0.88);">X</div>
<div class="t" style="left:2920px;top:897px;font-size:16px;color:#cfcfcf;font-weight:normal;transform:scaleX(0.88);">:</div>
<div class="t" style="left:2901px;top:915px;font-size:16px;color:#cfcfcf;font-weight:normal;transform:scaleX(0.88);">Y</div>
<div class="t" style="left:2920px;top:915px;font-size:16px;color:#cfcfcf;font-weight:normal;transform:scaleX(0.88);">:</div>
<svg style="left:3066px;top:901px" width="24" height="22"><path d="M3 21V5h17" fill="none" stroke="#ddd" stroke-width="1.6"/><path d="M18 2l4 3-4 3zM0 18l3 4 3-4z" fill="#ddd"/><path d="M8 20h12V9" fill="none" stroke="#ddd" stroke-width="1.4" stroke-dasharray="1.5 1.5"/></svg>
<div class="t" style="left:3104px;top:897px;font-size:16px;color:#cfcfcf;font-weight:normal;transform:scaleX(0.88);">W</div>
<div class="t" style="left:3127px;top:897px;font-size:16px;color:#cfcfcf;font-weight:normal;transform:scaleX(0.88);">:</div>
<div class="t" style="left:3108px;top:915px;font-size:16px;color:#cfcfcf;font-weight:normal;transform:scaleX(0.88);">H</div>
<div class="t" style="left:3127px;top:915px;font-size:16px;color:#cfcfcf;font-weight:normal;transform:scaleX(0.88);">:</div>
<div class="t" style="left:3199px;top:897px;font-size:16px;color:#dedede;font-weight:normal;transform:scaleX(0.88);">2.493</div>
<div class="t" style="left:3199px;top:915px;font-size:16px;color:#dedede;font-weight:normal;transform:scaleX(0.88);">2.403</div>
<div class="a" style="left:2849px;top:937px;width:419px;height:1px;background:#474747;"></div>
<div class="t" style="left:2867px;top:952px;font-size:16px;color:#dedede;font-weight:normal;transform:scaleX(0.88);">Doc: 49.8M/325.6M</div>
<div class="a" style="left:2849px;top:979px;width:419px;height:1px;background:#474747;"></div>
<div class="a" style="left:2849px;top:1112px;width:419px;height:4px;background:#2e2e2e;"></div>
<div class="a" style="left:2849px;top:1116px;width:419px;height:42px;background:#424242;"></div>
<div class="a" style="left:2849px;top:1116px;width:82px;height:42px;background:#535353;"></div>
<div class="t" style="left:2865px;top:1129px;font-size:17px;color:#f2f2f2;font-weight:bold;transform:scaleX(0.89);">History</div>
<svg style="left:3243px;top:1131px" width="17" height="13"><path d="M0 1.5h16M0 4.5h16M0 7.5h16M0 10.5h16" stroke="#d8d8d8" stroke-width="1.4"/></svg>
<div class="a" style="left:3243px;top:1165px;width:23px;height:245px;background:#4c4c4c;"></div>
<svg style="left:2856px;top:1183px" width="24" height="22"><path d="M23 1L11 13l2 2L23 4z" fill="#ddd"/><path d="M10 14c-3 0-5 3-6 7 4-1 7-2 8-5z" fill="#ddd"/><path d="M2 9c1-4 4-6 8-5M1 6l1 4 4-1" fill="none" stroke="#ddd" stroke-width="1.5"/></svg>
<div class="a" style="left:2888px;top:1176px;width:35px;height:35px;background:#ffffff;box-sizing:border-box;border:1px solid #2a2a2a;"></div>
<svg style="left:2890px;top:1178px" width="31" height="31"><circle cx="17" cy="17" r="10" fill="#9a40b8"/><circle cx="9" cy="24" r="5" fill="#ffccff"/><circle cx="24" cy="9" r="3" fill="#000"/><rect x="3" y="2" width="14" height="2" fill="#7a30a0"/></svg>
<div class="t" style="left:2932px;top:1182px;font-size:17px;color:#d6d6d6;font-weight:normal;transform:scaleX(0.88);">Purple is life itself.psd</div>
<div class="a" style="left:2849px;top:1223px;width:394px;height:1px;background:#474747;"></div>
<div class="a" style="left:2849px;top:1261px;width:394px;height:34px;background:#6a6a6a;"></div>
<svg style="left:2856px;top:1232px" width="60" height="24"><rect x="1" y="1" width="19" height="19" fill="none" stroke="#4a4a4a"/><path d="M38 1h16l3 3v19H38z" fill="#e0e0e0"/><path d="M41 9h13M41 12h13M41 15h13M41 18h13" stroke="#666" stroke-width="1"/></svg>
<div class="t" style="left:2938px;top:1233px;font-size:17px;color:#dedede;font-weight:normal;transform:scaleX(0.88);">Open</div>
<svg style="left:2856px;top:1266px" width="60" height="24"><rect x="1" y="1" width="19" height="19" fill="none" stroke="#4a4a4a"/><path d="M38 1h16l3 3v19H38z" fill="#e0e0e0"/><path d="M41 9h13M41 12h13M41 15h13M41 18h13" stroke="#666" stroke-width="1"/></svg>
<div class="t" style="left:2938px;top:1267px;font-size:17px;color:#dedede;font-weight:normal;transform:scaleX(0.88);">Load Selection</div>
<div class="a" style="left:2849px;top:1410px;width:419px;height:1px;background:#3f3f3f;"></div>
<svg style="left:3110px;top:1419px" width="140" height="22">
<path d="M8 3h8l4 4v13H8z" fill="#e0e0e0"/><path d="M1 13h9M5.5 8.5v9" stroke="#e0e0e0" stroke-width="3"/>
<path d="M54 6h5l2-3h6l2 3h5v14H54z" fill="#e0e0e0"/><circle cx="64" cy="13" r="4" fill="#535353"/>
<path d="M98 5h16M103 2h6M99 6l1 15h12l1-15M103 9v10M106 9v10M109 9v10" fill="none" stroke="#e0e0e0" stroke-width="1.8"/>
</svg>
<div class="a" style="left:2849px;top:1449px;width:419px;height:3px;background:#2e2e2e;"></div>
<div class="a" style="left:2849px;top:1452px;width:419px;height:42px;background:#424242;"></div>
<svg style="left:3243px;top:1467px" width="17" height="13"><path d="M0 1.5h16M0 4.5h16M0 7.5h16M0 10.5h16" stroke="#d8d8d8" stroke-width="1.4"/></svg>
<svg style="left:3110px;top:1500px" width="100" height="36">
<path d="M3 6h20v20H3z" fill="none" stroke="#ddd" stroke-width="2"/><rect x="0" y="3" width="6" height="6" fill="#ddd"/><rect x="20" y="3" width="6" height="6" fill="#ddd"/><rect x="0" y="23" width="6" height="6" fill="#ddd"/><rect x="20" y="23" width="6" height="6" fill="#ddd"/>
<path d="M40 14h8v12H40z" fill="#ddd"/><path d="M45 3h9l4 4v16H46" fill="none" stroke="#ddd" stroke-width="2"/>
<rect x="75" y="6" width="14" height="28" rx="7" fill="#3a3a3a"/><circle cx="82" cy="9" r="7" fill="#ddd"/>
</svg>
<div class="a" style="left:2849px;top:1541px;width:419px;height:1px;background:#474747;"></div>
<div class="t" style="left:3090px;top:1555px;font-size:17px;color:#dcdcdc;font-weight:normal;transform:scaleX(0.88);">ity:</div>
<div class="a" style="left:3121px;top:1552px;width:74px;height:23px;background:#3d3d3d;border-radius:2px;"></div>
<div class="a" style="left:3173px;top:1552px;width:1px;height:23px;background:#555;"></div>
<div class="t" style="left:3127px;top:1556px;font-size:17px;color:#e0e0e0;font-weight:normal;transform:scaleX(0.88);">100%</div>
<svg style="left:3180px;top:1562px" width="10" height="6"><path d="M1 1l4 4 4-4" fill="none" stroke="#bbb" stroke-width="1.3"/></svg>
<div class="a" style="left:2849px;top:1582px;width:419px;height:1px;background:#474747;"></div>
<div class="t" style="left:3093px;top:1597px;font-size:17px;color:#dcdcdc;font-weight:normal;transform:scaleX(0.88);">Fill:</div>
<div class="a" style="left:3121px;top:1594px;width:74px;height:23px;background:#3d3d3d;border-radius:2px;"></div>
<div class="a" style="left:3173px;top:1594px;width:1px;height:23px;background:#555;"></div>
<div class="t" style="left:3127px;top:1598px;font-size:17px;color:#e0e0e0;font-weight:normal;transform:scaleX(0.88);">100%</div>
<svg style="left:3180px;top:1604px" width="10" height="6"><path d="M1 1l4 4 4-4" fill="none" stroke="#bbb" stroke-width="1.3"/></svg>
<div class="a" style="left:2849px;top:1625px;width:419px;height:1px;background:#474747;"></div>
<div class="a" style="left:3243px;top:1630px;width:23px;height:431px;background:#4c4c4c;"></div>
<svg style="left:3250px;top:1640px" width="12" height="7"><path d="M1 6l5-5 5 5" fill="none" stroke="#999" stroke-width="1.3"/></svg>
<div class="a" style="left:3249px;top:1679px;width:14px;height:191px;background:#6a6a6a;border-radius:2px;"></div>
<svg style="left:3250px;top:2042px" width="12" height="7"><path d="M1 1l5 5 5-5" fill="none" stroke="#999" stroke-width="1.3"/></svg>
<div class="a" style="left:2849px;top:1628px;width:394px;height:1px;background:#4a4a4a;"></div>
<div class="a" style="left:2849px;top:1690px;width:394px;height:1px;background:#4a4a4a;"></div>
<div class="a" style="left:2849px;top:1752px;width:394px;height:1px;background:#4a4a4a;"></div>
<div class="a" style="left:2849px;top:1813px;width:394px;height:1px;background:#4a4a4a;"></div>
<div class="a" style="left:2849px;top:1875px;width:394px;height:1px;background:#4a4a4a;"></div>
<div class="a" style="left:2849px;top:1937px;width:394px;height:1px;background:#4a4a4a;"></div>
<div class="a" style="left:2849px;top:1998px;width:394px;height:1px;background:#4a4a4a;"></div>
<div class="a" style="left:2849px;top:1937px;width:394px;height:61px;background:#6a6a6a;"></div>
<div class="a" style="left:2849px;top:2061px;width:419px;height:1px;background:#3f3f3f;"></div>
<svg style="left:3082px;top:2070px" width="180" height="30">
<circle cx="8" cy="11" r="8" fill="#ddd"/><path d="M14 22l3 3 3-3z" fill="#ddd"/>
<path d="M46 6h8l2 2h10v13H46z" fill="#e0e0e0"/>
<path d="M87 3h14v17h-10l-4-4z" fill="none" stroke="#e0e0e0" stroke-width="2"/>
<path d="M122 5h16M127 2h6M123 6l1 15h12l1-15M127 9v10M130 9v10M133 9v10" fill="none" stroke="#e0e0e0" stroke-width="1.8"/>
</svg>
<svg style="left:3005px;top:2090px" width="10" height="6"><path d="M0 0h10l-5 5z" fill="#ddd"/></svg>
<div class="a" style="left:2855px;top:1345px;width:240px;height:743px;background:#ffffff;box-sizing:border-box;border:1px solid #0078d7;box-shadow:2px 2px 3px rgba(0,0,0,0.35);"></div>
<div class="a" style="left:2856px;top:1403px;width:238px;height:2px;background:#c8c8c8;"></div>
<div class="a" style="left:2856px;top:1541px;width:238px;height:2px;background:#c8c8c8;"></div>
<div class="a" style="left:2856px;top:1679px;width:238px;height:2px;background:#c8c8c8;"></div>
<div class="a" style="left:2856px;top:1864px;width:238px;height:2px;background:#c8c8c8;"></div>
<div class="a" style="left:2856px;top:1979px;width:238px;height:2px;background:#c8c8c8;"></div>
<div class="a" style="left:2856px;top:2013px;width:238px;height:24px;background:#0078d7;"></div>
<div class="a" style="left:2857px;top:1553px;width:236px;height:24px;box-sizing:border-box;border:1px dotted #222;"></div>
<div class="t" style="left:2858px;top:1350px;font-size:16px;color:#000000;font-weight:normal;transform:scaleX(0.9);">Normal</div>
<div class="t" style="left:2858px;top:1374px;font-size:16px;color:#000000;font-weight:normal;transform:scaleX(0.9);">Dissolve</div>
<div class="t" style="left:2858px;top:1420px;font-size:16px;color:#000000;font-weight:normal;transform:scaleX(0.9);">Darken</div>
<div class="t" style="left:2858px;top:1443px;font-size:16px;color:#000000;font-weight:normal;transform:scaleX(0.9);">Multiply</div>
<div class="t" style="left:2858px;top:1465px;font-size:16px;color:#000000;font-weight:normal;transform:scaleX(0.9);">Color Burn</div>
<div class="t" style="left:2858px;top:1489px;font-size:16px;color:#000000;font-weight:normal;transform:scaleX(0.9);">Linear Burn</div>
<div class="t" style="left:2858px;top:1512px;font-size:16px;color:#000000;font-weight:normal;transform:scaleX(0.9);">Darker Color</div>
<div class="t" style="left:2858px;top:1557px;font-size:16px;color:#000000;font-weight:normal;transform:scaleX(0.9);">Lighten</div>
<div class="t" style="left:2858px;top:1581px;font-size:16px;color:#000000;font-weight:normal;transform:scaleX(0.9);">Screen</div>
<div class="t" style="left:2858px;top:1603px;font-size:16px;color:#000000;font-weight:normal;transform:scaleX(0.9);">Color Dodge</div>
<div class="t" style="left:2858px;top:1627px;font-size:16px;color:#000000;font-weight:normal;transform:scaleX(0.9);">Linear Dodge (Add)</div>
<div class="t" style="left:2858px;top:1650px;font-size:16px;color:#000000;font-weight:normal;transform:scaleX(0.9);">Lighter Color</div>
<div class="t" style="left:2858px;top:1696px;font-size:16px;color:#000000;font-weight:normal;transform:scaleX(0.9);">Overlay</div>
<div class="t" style="left:2858px;top:1719px;font-size:16px;color:#000000;font-weight:normal;transform:scaleX(0.9);">Soft Light</div>
<div class="t" style="left:2858px;top:1741px;font-size:16px;color:#000000;font-weight:normal;transform:scaleX(0.9);">Hard Light</div>
<div class="t" style="left:2858px;top:1765px;font-size:16px;color:#000000;font-weight:normal;transform:scaleX(0.9);">Vivid Light</div>
<div class="t" style="left:2858px;top:1788px;font-size:16px;color:#000000;font-weight:normal;transform:scaleX(0.9);">Linear Light</div>
<div class="t" style="left:2858px;top:1810px;font-size:16px;color:#000000;font-weight:normal;transform:scaleX(0.9);">Pin Light</div>
<div class="t" style="left:2858px;top:1834px;font-size:16px;color:#000000;font-weight:normal;transform:scaleX(0.9);">Hard Mix</div>
<div class="t" style="left:2858px;top:1879px;font-size:16px;color:#000000;font-weight:normal;transform:scaleX(0.9);">Difference</div>
<div class="t" style="left:2858px;top:1903px;font-size:16px;color:#000000;font-weight:normal;transform:scaleX(0.9);">Exclusion</div>
<div class="t" style="left:2858px;top:1926px;font-size:16px;color:#000000;font-weight:normal;transform:scaleX(0.9);">Subtract</div>
<div class="t" style="left:2858px;top:1948px;font-size:16px;color:#000000;font-weight:normal;transform:scaleX(0.9);">Divide</div>
<div class="t" style="left:2858px;top:1995px;font-size:16px;color:#000000;font-weight:normal;transform:scaleX(0.9);">Hue</div>
<div class="t" style="left:2858px;top:2017px;font-size:16px;color:#ffffff;font-weight:normal;transform:scaleX(0.9);">Saturation</div>
<div class="t" style="left:2858px;top:2041px;font-size:16px;color:#000000;font-weight:normal;transform:scaleX(0.9);">Color</div>
<div class="t" style="left:2858px;top:2064px;font-size:16px;color:#000000;font-weight:normal;transform:scaleX(0.9);">Luminosity</div>
<div class="a" style="left:3272px;top:111px;width:63px;height:43px;background:#535353;"></div>
<div class="t" style="left:3286px;top:124px;font-size:17px;color:#f2f2f2;font-weight:bold;transform:scaleX(0.89);">Swatch</div>
<div class="a" style="left:3279px;top:168px;width:53px;height:25px;background:#3a3a3a;"></div>
<div class="a" style="left:3281px;top:169px;width:23px;height:23px;background:#1a1a1a;"></div>
<div class="a" style="left:3307px;top:169px;width:23px;height:23px;background:#ffffff;"></div>
<div class="a" style="left:3274px;top:215px;width:24px;height:24px;background:#ff0000;"></div>
<div class="a" style="left:3301px;top:215px;width:24px;height:24px;background:#ffff00;"></div>
<div class="a" style="left:3328px;top:215px;width:24px;height:24px;background:#00ff00;"></div>
<div class="a" style="left:3274px;top:242px;width:24px;height:24px;background:#a6a6a6;"></div>
<div class="a" style="left:3301px;top:242px;width:24px;height:24px;background:#999999;"></div>
<div class="a" style="left:3328px;top:242px;width:24px;height:24px;background:#e21c24;"></div>
<div class="a" style="left:3274px;top:269px;width:24px;height:24px;background:#333333;"></div>
<div class="a" style="left:3301px;top:269px;width:24px;height:24px;background:#222222;"></div>
<div class="a" style="left:3328px;top:269px;width:24px;height:24px;background:#111111;"></div>
<div class="a" style="left:3274px;top:296px;width:24px;height:24px;background:#8496d0;"></div>
<div class="a" style="left:3301px;top:296px;width:24px;height:24px;background:#8b82c4;"></div>
<div class="a" style="left:3328px;top:296px;width:24px;height:24px;background:#a686c4;"></div>
<div class="a" style="left:3274px;top:323px;width:24px;height:24px;background:#00bff3;"></div>
<div class="a" style="left:3301px;top:323px;width:24px;height:24px;background:#3c8fd6;"></div>
<div class="a" style="left:3328px;top:323px;width:24px;height:24px;background:#4c66c0;"></div>
<div class="a" style="left:3274px;top:350px;width:24px;height:24px;background:#00a651;"></div>
<div class="a" style="left:3301px;top:350px;width:24px;height:24px;background:#00a99d;"></div>
<div class="a" style="left:3328px;top:350px;width:24px;height:24px;background:#00aeef;"></div>
<div class="a" style="left:3274px;top:377px;width:24px;height:24px;background:#598527;"></div>
<div class="a" style="left:3301px;top:377px;width:24px;height:24px;background:#197b30;"></div>
<div class="a" style="left:3328px;top:377px;width:24px;height:24px;background:#007236;"></div>
<div class="a" style="left:3274px;top:404px;width:24px;height:24px;background:#8c4a00;"></div>
<div class="a" style="left:3301px;top:404px;width:24px;height:24px;background:#8a7b00;"></div>
<div class="a" style="left:3328px;top:404px;width:24px;height:24px;background:#3c7a1e;"></div>
<div class="a" style="left:3274px;top:431px;width:24px;height:24px;background:#c7b299;"></div>
<div class="a" style="left:3301px;top:431px;width:24px;height:24px;background:#998675;"></div>
<div class="a" style="left:3328px;top:431px;width:24px;height:24px;background:#736357;"></div>
<div class="a" style="left:3272px;top:620px;width:411px;height:318px;background:#4d4d4d;"></div>
<div class="a" style="left:3683px;top:620px;width:13px;height:318px;background:#535353;"></div>
<div class="a" style="left:3272px;top:938px;width:425px;height:1px;background:#474747;"></div>
<svg style="left:3578px;top:946px" width="70" height="22">
<path d="M3 2h14v17H7l-4-4z" fill="none" stroke="#e0e0e0" stroke-width="2"/>
<path d="M43 5h16M48 2h6M44 6l1 15h12l1-15M48 9v10M51 9v10M54 9v10" fill="none" stroke="#e0e0e0" stroke-width="1.8"/>
</svg>
<div class="a" style="left:3272px;top:974px;width:425px;height:3px;background:#2e2e2e;"></div>
<div class="a" style="left:3335px;top:111px;width:362px;height:510px;background:#2b2b2b;"></div>
<div class="a" style="left:3335px;top:111px;width:1px;height:510px;background:#3a3a3a;"></div>
<div class="a" style="left:3336px;top:112px;width:360px;height:42px;background:#424242;"></div>
<div class="a" style="left:3404px;top:112px;width:89px;height:42px;background:#535353;"></div>
<div class="t" style="left:3350px;top:125px;font-size:17px;color:#a6a6a6;font-weight:bold;transform:scaleX(0.89);">Learn</div>
<div class="t" style="left:3418px;top:125px;font-size:17px;color:#f2f2f2;font-weight:bold;transform:scaleX(0.89);">Libraries</div>
<svg style="left:3634px;top:125px" width="16" height="14"><path d="M1 1l6 6-6 6M8 1l6 6-6 6" fill="none" stroke="#ddd" stroke-width="1.5"/></svg>
<div class="a" style="left:3660px;top:122px;width:1px;height:20px;background:#bbb;"></div>
<svg style="left:3671px;top:127px" width="17" height="13"><path d="M0 1.5h16M0 4.5h16M0 7.5h16M0 10.5h16" stroke="#d8d8d8" stroke-width="1.4"/></svg>
<svg style="left:3348px;top:174px" width="18" height="18"><circle cx="7" cy="7" r="5.5" fill="none" stroke="#aaa" stroke-width="2"/><path d="M11 11l5 5" stroke="#aaa" stroke-width="2.2"/></svg>
<div class="t" style="left:3371px;top:173px;font-size:17px;color:#4e4e4e;font-weight:normal;transform:scaleX(0.88);font-style:italic;">Search Current Library</div>
<svg style="left:3668px;top:178px" width="12" height="8"><path d="M1 1l5 5 5-5" fill="none" stroke="#888" stroke-width="1.3"/></svg>
<div class="a" style="left:3348px;top:198px;width:336px;height:1px;background:#3c3c3c;"></div>
<div class="a" style="left:3350px;top:211px;width:333px;height:27px;background:#222222;box-sizing:border-box;border:1px solid #333;border-radius:3px;"></div>
<div class="t" style="left:3365px;top:216px;font-size:17px;color:#a8a8a8;font-weight:normal;transform:scaleX(0.88);">My Library</div>
<svg style="left:3664px;top:221px" width="12" height="8"><path d="M1 1l5 5 5-5" fill="none" stroke="#999" stroke-width="1.4"/></svg>
<div class="t" style="left:3347px;top:255px;font-size:17px;color:#a0a0a0;font-weight:normal;transform:scaleX(0.88);">View by Type</div>
<svg style="left:3456px;top:259px" width="12" height="8"><path d="M1 1l5 5 5-5" fill="none" stroke="#999" stroke-width="1.4"/></svg>
<div class="a" style="left:3621px;top:250px;width:27px;height:27px;background:#1e1e1e;border-radius:2px;"></div>
<svg style="left:3625px;top:254px" width="20" height="20"><rect x="0" y="0" width="8" height="8" fill="#8a8a8a"/><rect x="11" y="0" width="8" height="8" fill="#8a8a8a"/><rect x="0" y="11" width="8" height="8" fill="#8a8a8a"/><rect x="11" y="11" width="8" height="8" fill="#8a8a8a"/></svg>
<svg style="left:3657px;top:254px" width="20" height="20"><rect x="0" y="0" width="4" height="4" fill="#8a8a8a"/><rect x="6" y="1" width="13" height="2" fill="#8a8a8a"/><rect x="0" y="7" width="4" height="4" fill="#8a8a8a"/><rect x="6" y="8" width="13" height="2" fill="#8a8a8a"/><rect x="0" y="14" width="4" height="4" fill="#8a8a8a"/><rect x="6" y="15" width="13" height="2" fill="#8a8a8a"/></svg>
<svg style="left:3388px;top:280px" width="36" height="18"><path d="M0 18L15 2a3 3 0 0 1 5 0L35 18z" fill="#ffffff"/></svg>
<div class="a" style="left:3345px;top:296px;width:344px;height:312px;background:#ffffff;border-radius:3px 3px 0 0;"></div>
<svg style="left:3348px;top:298px" width="338" height="192">
<defs>
<linearGradient id="lbg" x1="0" y1="0" x2="1" y2="1"><stop offset="0" stop-color="#9fdcf4"/><stop offset="0.5" stop-color="#7ccbee"/><stop offset="1" stop-color="#a8e0f6"/></linearGradient>
<linearGradient id="eye" x1="0" y1="0" x2="1" y2="1"><stop offset="0" stop-color="#5a2a6a"/><stop offset="0.35" stop-color="#8a4a3a"/><stop offset="0.6" stop-color="#d06a30"/><stop offset="1" stop-color="#f0a040"/></linearGradient>
<filter id="sh"><feGaussianBlur stdDeviation="2"/></filter>
</defs>
<rect width="338" height="192" fill="url(#lbg)"/>
<path d="M0 20l60-20M0 60L160 0M10 110L280 0M40 170L338 30M120 192L338 90M240 192L338 150" stroke="#e6f6fc" stroke-width="3" opacity="0.6"/>
<path d="M290 0l48 0 0 30z" fill="#ffffff" opacity="0.8"/>
<rect x="34" y="12" width="270" height="170" rx="6" fill="#2f4a55"/>
<path d="M60 180L200 40M110 182L270 30M150 182L300 60" stroke="#3c5a66" stroke-width="2" opacity="0.6"/>
<rect x="102" y="23" width="62" height="50" rx="3" fill="#d8d8de"/>
<rect x="110" y="30" width="62" height="51" rx="3" fill="#ffffff"/>
<text x="120" y="66" font-size="26" font-style="italic" font-family="Liberation Serif" fill="#4a4e70">Aa</text>
<rect x="16" y="95" width="120" height="62" rx="3" fill="#d86048"/>
<rect x="44" y="95" width="40" height="10" fill="#4e5478"/><rect x="84" y="95" width="40" height="10" fill="#2a2a60"/>
<rect x="26" y="104" width="42" height="68" rx="3" fill="#fbb45c"/>
<rect x="66" y="104" width="40" height="68" fill="#14a2cf"/>
<rect x="106" y="104" width="42" height="68" rx="3" fill="#9b2cfa"/>
<linearGradient id="ebk" x1="0" y1="0" x2="1" y2="0"><stop offset="0" stop-color="#1c9ad0"/><stop offset="0.5" stop-color="#5a7a8a"/><stop offset="1" stop-color="#e08a40"/></linearGradient>
<radialGradient id="eyt" cx="0.35" cy="0.25" r="0.9"><stop offset="0" stop-color="#4a2a5a"/><stop offset="0.45" stop-color="#5a2a40"/><stop offset="0.75" stop-color="#a04a2a"/><stop offset="1" stop-color="#e07a30"/></radialGradient>
<linearGradient id="ebt" x1="0" y1="0" x2="0" y2="1"><stop offset="0" stop-color="#e08a40" stop-opacity="0"/><stop offset="0.55" stop-color="#e89040" stop-opacity="0.75"/><stop offset="1" stop-color="#f0a040"/></linearGradient>
<rect x="190" y="57" width="120" height="98" rx="4" fill="url(#ebk)"/>
<rect x="201" y="68" width="120" height="97" rx="5" fill="url(#eyt)"/>
<rect x="201" y="110" width="120" height="55" rx="5" fill="url(#ebt)"/>
<circle cx="240.2" cy="82.5" r="1.3" fill="#e86020" opacity="0.87"/><circle cx="213.1" cy="123.9" r="1.5" fill="#40a0e0" opacity="0.52"/><circle cx="253.2" cy="74.7" r="0.7" fill="#f07030" opacity="0.53"/><circle cx="268.7" cy="159.0" r="1.2" fill="#f0a030" opacity="0.76"/><circle cx="248.8" cy="161.7" r="0.6" fill="#f8d040" opacity="0.63"/><circle cx="219.0" cy="79.3" r="0.9" fill="#f8d040" opacity="0.55"/><circle cx="269.4" cy="86.0" r="0.7" fill="#e86020" opacity="0.75"/><circle cx="293.7" cy="112.7" r="1.0" fill="#40a0e0" opacity="0.86"/><circle cx="284.5" cy="91.4" r="1.2" fill="#d03020" opacity="0.72"/><circle cx="210.6" cy="117.1" r="0.8" fill="#60c060" opacity="0.57"/><circle cx="259.7" cy="71.8" r="1.3" fill="#d03020" opacity="0.76"/><circle cx="305.3" cy="98.1" r="1.3" fill="#ffe080" opacity="0.76"/><circle cx="255.8" cy="148.6" r="1.5" fill="#ffe080" opacity="0.81"/><circle cx="209.7" cy="138.2" r="0.9" fill="#ffe080" opacity="0.63"/><circle cx="256.5" cy="84.1" r="0.7" fill="#f0a030" opacity="0.60"/><circle cx="310.2" cy="115.7" r="0.8" fill="#f07030" opacity="0.75"/><circle cx="306.2" cy="146.7" r="1.5" fill="#e04080" opacity="0.82"/><circle cx="318.4" cy="133.5" r="1.0" fill="#40a0e0" opacity="0.57"/><circle cx="222.8" cy="90.3" r="0.8" fill="#ffe080" opacity="0.87"/><circle cx="223.5" cy="95.1" r="0.7" fill="#d03020" opacity="0.67"/><circle cx="268.8" cy="159.5" r="1.3" fill="#d03020" opacity="0.93"/><circle cx="304.8" cy="159.4" r="1.3" fill="#d03020" opacity="0.68"/><circle cx="249.1" cy="77.9" r="1.2" fill="#f0a030" opacity="0.59"/><circle cx="318.2" cy="110.3" r="0.7" fill="#f0a030" opacity="0.55"/><circle cx="268.9" cy="119.5" r="1.2" fill="#e86020" opacity="0.89"/><circle cx="274.5" cy="82.3" r="0.9" fill="#60c060" opacity="0.77"/><circle cx="257.9" cy="79.1" r="1.1" fill="#ffe080" opacity="0.72"/><circle cx="238.8" cy="81.8" r="1.3" fill="#e04080" opacity="0.72"/><circle cx="314.3" cy="102.7" r="1.3" fill="#f0a030" opacity="0.84"/><circle cx="301.8" cy="117.8" r="1.0" fill="#40a0e0" opacity="0.74"/><circle cx="293.9" cy="99.6" r="0.8" fill="#40a0e0" opacity="0.86"/><circle cx="205.3" cy="94.8" r="0.9" fill="#60c060" opacity="0.70"/><circle cx="312.6" cy="162.9" r="1.6" fill="#60c060" opacity="0.54"/><circle cx="214.1" cy="113.1" r="0.9" fill="#ffe080" opacity="0.78"/><circle cx="308.2" cy="148.7" r="1.1" fill="#60c060" opacity="0.86"/><circle cx="212.0" cy="131.4" r="1.5" fill="#40a0e0" opacity="0.72"/><circle cx="223.1" cy="143.8" r="0.9" fill="#f07030" opacity="0.71"/><circle cx="289.7" cy="76.2" r="0.8" fill="#f8d040" opacity="0.51"/><circle cx="312.6" cy="83.0" r="1.1" fill="#f0a030" opacity="0.51"/><circle cx="316.6" cy="130.4" r="1.1" fill="#f8d040" opacity="0.70"/><circle cx="304.9" cy="147.3" r="0.8" fill="#e04080" opacity="0.60"/><circle cx="261.1" cy="141.3" r="0.9" fill="#d03020" opacity="0.69"/><circle cx="217.5" cy="155.4" r="1.0" fill="#ffe080" opacity="0.80"/><circle cx="305.6" cy="80.6" r="0.8" fill="#d03020" opacity="0.51"/><circle cx="253.9" cy="85.6" r="0.6" fill="#f8d040" opacity="0.58"/><circle cx="294.5" cy="78.2" r="1.2" fill="#40a0e0" opacity="0.59"/><circle cx="207.0" cy="77.4" r="1.1" fill="#f0a030" opacity="0.84"/><circle cx="309.7" cy="110.6" r="1.2" fill="#d03020" opacity="0.77"/><circle cx="225.5" cy="94.6" r="1.1" fill="#ffe080" opacity="0.73"/><circle cx="231.2" cy="118.2" r="1.5" fill="#e04080" opacity="0.92"/><circle cx="307.3" cy="87.4" r="1.0" fill="#f07030" opacity="0.55"/><circle cx="254.2" cy="75.0" r="0.8" fill="#e86020" opacity="0.60"/><circle cx="237.7" cy="79.7" r="1.4" fill="#60c060" opacity="0.56"/><circle cx="306.2" cy="160.9" r="0.8" fill="#e86020" opacity="0.68"/><circle cx="259.5" cy="163.0" r="1.4" fill="#f8d040" opacity="0.82"/><circle cx="319.3" cy="106.8" r="1.0" fill="#60c060" opacity="0.64"/><circle cx="287.2" cy="69.9" r="1.2" fill="#ffe080" opacity="0.82"/><circle cx="315.4" cy="78.8" r="1.5" fill="#40a0e0" opacity="0.94"/><circle cx="214.4" cy="93.5" r="0.6" fill="#f8d040" opacity="0.62"/><circle cx="217.3" cy="108.5" r="1.5" fill="#e04080" opacity="0.68"/><circle cx="240.6" cy="94.8" r="1.4" fill="#f8d040" opacity="0.69"/><circle cx="210.5" cy="158.1" r="1.2" fill="#e04080" opacity="0.54"/><circle cx="303.0" cy="74.4" r="1.5" fill="#ffe080" opacity="0.51"/><circle cx="319.3" cy="108.1" r="1.5" fill="#f8d040" opacity="0.52"/><circle cx="285.7" cy="158.1" r="1.6" fill="#e04080" opacity="0.52"/><circle cx="225.8" cy="98.0" r="0.9" fill="#40a0e0" opacity="0.63"/><circle cx="261.0" cy="85.1" r="0.9" fill="#f0a030" opacity="0.95"/><circle cx="206.4" cy="69.8" r="1.1" fill="#40a0e0" opacity="0.73"/><circle cx="231.0" cy="110.9" r="1.3" fill="#f07030" opacity="0.80"/><circle cx="266.4" cy="153.3" r="1.6" fill="#e04080" opacity="0.81"/><circle cx="317.9" cy="100.9" r="1.4" fill="#f8d040" opacity="0.68"/><circle cx="243.0" cy="73.2" r="0.7" fill="#e86020" opacity="0.78"/><circle cx="305.8" cy="109.4" r="0.7" fill="#f07030" opacity="0.89"/><circle cx="281.1" cy="95.1" r="0.8" fill="#e04080" opacity="0.52"/><circle cx="223.9" cy="93.8" r="0.6" fill="#60c060" opacity="0.93"/><circle cx="316.8" cy="120.5" r="0.8" fill="#e04080" opacity="0.60"/><circle cx="223.6" cy="100.2" r="0.7" fill="#e04080" opacity="0.73"/><circle cx="225.7" cy="116.5" r="0.6" fill="#e04080" opacity="0.87"/><circle cx="219.0" cy="124.3" r="1.0" fill="#e04080" opacity="0.64"/><circle cx="229.5" cy="124.2" r="1.1" fill="#f8d040" opacity="0.80"/><circle cx="286.5" cy="152.4" r="1.0" fill="#60c060" opacity="0.82"/><circle cx="260.3" cy="95.3" r="1.2" fill="#f8d040" opacity="0.52"/><circle cx="300.6" cy="153.6" r="1.2" fill="#d03020" opacity="0.56"/><circle cx="297.0" cy="147.3" r="1.2" fill="#40a0e0" opacity="0.54"/><circle cx="206.9" cy="129.2" r="1.6" fill="#f07030" opacity="0.88"/><circle cx="288.9" cy="92.2" r="0.7" fill="#e04080" opacity="0.61"/><circle cx="291.3" cy="90.2" r="1.2" fill="#ffe080" opacity="0.72"/><circle cx="211.1" cy="82.2" r="0.9" fill="#e04080" opacity="0.78"/><circle cx="217.7" cy="114.3" r="1.1" fill="#e86020" opacity="0.81"/><circle cx="281.7" cy="95.9" r="1.1" fill="#ffe080" opacity="0.71"/><circle cx="292.5" cy="163.4" r="1.1" fill="#e04080" opacity="0.94"/><circle cx="312.5" cy="69.7" r="1.1" fill="#d03020" opacity="0.94"/><circle cx="255.0" cy="93.8" r="0.8" fill="#40a0e0" opacity="0.53"/><circle cx="212.7" cy="139.8" r="0.9" fill="#60c060" opacity="0.56"/><circle cx="298.8" cy="116.8" r="1.3" fill="#40a0e0" opacity="0.72"/><circle cx="305.4" cy="105.8" r="0.8" fill="#ffe080" opacity="0.81"/><circle cx="246.4" cy="79.6" r="0.9" fill="#60c060" opacity="0.84"/><circle cx="301.0" cy="79.5" r="1.5" fill="#f0a030" opacity="0.91"/><circle cx="319.9" cy="124.6" r="1.0" fill="#f07030" opacity="0.84"/><circle cx="302.8" cy="94.9" r="0.7" fill="#e04080" opacity="0.79"/><circle cx="219.6" cy="161.2" r="1.0" fill="#60c060" opacity="0.59"/><circle cx="246.1" cy="159.8" r="1.5" fill="#f07030" opacity="0.91"/><circle cx="313.0" cy="120.7" r="1.3" fill="#f0a030" opacity="0.92"/><circle cx="304.6" cy="114.6" r="1.2" fill="#f8d040" opacity="0.71"/><circle cx="242.6" cy="96.6" r="1.3" fill="#e04080" opacity="0.68"/><circle cx="230.2" cy="114.4" r="1.3" fill="#e86020" opacity="0.58"/><circle cx="221.1" cy="88.0" r="1.5" fill="#ffe080" opacity="0.75"/><circle cx="255.5" cy="100.0" r="1.4" fill="#f07030" opacity="0.56"/><circle cx="224.7" cy="76.7" r="0.9" fill="#e86020" opacity="0.64"/><circle cx="245.5" cy="145.7" r="0.8" fill="#f0a030" opacity="0.84"/><circle cx="234.7" cy="160.9" r="0.7" fill="#d03020" opacity="0.74"/><circle cx="295.3" cy="149.5" r="0.7" fill="#40a0e0" opacity="0.67"/><circle cx="298.1" cy="160.9" r="0.7" fill="#f07030" opacity="0.82"/><circle cx="307.7" cy="113.4" r="1.2" fill="#f0a030" opacity="0.53"/><circle cx="311.8" cy="157.1" r="1.1" fill="#ffe080" opacity="0.94"/><circle cx="231.3" cy="78.5" r="0.8" fill="#d03020" opacity="0.94"/><circle cx="214.8" cy="147.2" r="1.3" fill="#ffe080" opacity="0.54"/><circle cx="293.7" cy="68.1" r="0.7" fill="#f0a030" opacity="0.79"/><circle cx="237.8" cy="80.3" r="0.9" fill="#f07030" opacity="0.81"/><circle cx="215.2" cy="74.8" r="1.1" fill="#40a0e0" opacity="0.67"/><circle cx="228.4" cy="125.7" r="0.6" fill="#e04080" opacity="0.95"/><circle cx="234.9" cy="98.4" r="1.4" fill="#40a0e0" opacity="0.71"/><circle cx="229.7" cy="91.7" r="1.6" fill="#e04080" opacity="0.52"/><circle cx="224.9" cy="152.9" r="1.2" fill="#e86020" opacity="0.62"/><circle cx="280.7" cy="156.8" r="0.8" fill="#f0a030" opacity="0.81"/><circle cx="202.8" cy="96.0" r="1.4" fill="#e86020" opacity="0.59"/><circle cx="316.4" cy="97.9" r="1.4" fill="#40a0e0" opacity="0.71"/><circle cx="233.3" cy="153.4" r="0.7" fill="#ffe080" opacity="0.77"/><circle cx="307.8" cy="114.6" r="1.5" fill="#f0a030" opacity="0.93"/><circle cx="219.3" cy="105.8" r="0.8" fill="#f8d040" opacity="0.69"/><circle cx="285.8" cy="85.7" r="1.0" fill="#60c060" opacity="0.83"/><circle cx="319.7" cy="157.4" r="0.9" fill="#f8d040" opacity="0.79"/><circle cx="287.6" cy="148.6" r="1.6" fill="#ffe080" opacity="0.58"/><circle cx="202.3" cy="94.9" r="1.0" fill="#e86020" opacity="0.75"/><circle cx="238.4" cy="145.2" r="0.7" fill="#ffe080" opacity="0.59"/><circle cx="231.3" cy="128.0" r="1.0" fill="#f07030" opacity="0.52"/><circle cx="209.4" cy="156.3" r="0.9" fill="#e86020" opacity="0.90"/><circle cx="242.0" cy="94.1" r="1.6" fill="#f0a030" opacity="0.62"/><circle cx="286.6" cy="98.4" r="0.9" fill="#f0a030" opacity="0.82"/><circle cx="272.3" cy="145.3" r="1.5" fill="#e86020" opacity="0.51"/><circle cx="229.6" cy="113.6" r="1.6" fill="#f07030" opacity="0.86"/><circle cx="309.8" cy="146.2" r="0.7" fill="#ffe080" opacity="0.58"/><circle cx="211.3" cy="86.9" r="1.4" fill="#40a0e0" opacity="0.68"/><circle cx="221.0" cy="108.9" r="0.7" fill="#e86020" opacity="0.62"/><circle cx="211.9" cy="77.3" r="1.1" fill="#ffe080" opacity="0.58"/><circle cx="217.7" cy="112.2" r="1.5" fill="#40a0e0" opacity="0.84"/><circle cx="301.2" cy="96.2" r="1.2" fill="#60c060" opacity="0.61"/><circle cx="229.8" cy="95.0" r="1.5" fill="#40a0e0" opacity="0.65"/><circle cx="248.7" cy="163.3" r="1.1" fill="#40a0e0" opacity="0.79"/><circle cx="213.9" cy="112.5" r="0.6" fill="#f0a030" opacity="0.71"/><circle cx="298.7" cy="148.7" r="1.5" fill="#f0a030" opacity="0.89"/><circle cx="229.5" cy="72.8" r="1.2" fill="#40a0e0" opacity="0.92"/><circle cx="245.9" cy="151.1" r="1.0" fill="#e04080" opacity="0.85"/><circle cx="280.4" cy="68.6" r="1.2" fill="#60c060" opacity="0.60"/><circle cx="245.5" cy="81.6" r="0.8" fill="#e04080" opacity="0.52"/><circle cx="288.4" cy="155.7" r="1.4" fill="#60c060" opacity="0.68"/><circle cx="205.7" cy="115.6" r="1.1" fill="#f07030" opacity="0.55"/><circle cx="212.8" cy="83.7" r="1.3" fill="#f07030" opacity="0.94"/><circle cx="289.9" cy="152.8" r="1.0" fill="#f0a030" opacity="0.89"/><circle cx="319.6" cy="102.9" r="0.8" fill="#f07030" opacity="0.59"/><circle cx="202.7" cy="154.6" r="1.0" fill="#e86020" opacity="0.68"/><circle cx="306.2" cy="112.2" r="0.8" fill="#f0a030" opacity="0.52"/><circle cx="218.8" cy="145.4" r="1.0" fill="#60c060" opacity="0.83"/><circle cx="222.3" cy="101.4" r="0.8" fill="#f8d040" opacity="0.92"/><circle cx="214.8" cy="115.1" r="1.4" fill="#40a0e0" opacity="0.64"/><circle cx="300.8" cy="72.2" r="1.5" fill="#60c060" opacity="0.52"/><circle cx="311.3" cy="105.2" r="1.5" fill="#f8d040" opacity="0.79"/><circle cx="225.1" cy="113.4" r="1.2" fill="#f0a030" opacity="0.68"/><circle cx="231.2" cy="137.6" r="1.5" fill="#f0a030" opacity="0.90"/><circle cx="302.2" cy="142.7" r="1.2" fill="#e04080" opacity="0.76"/><circle cx="253.7" cy="70.2" r="1.2" fill="#ffe080" opacity="0.71"/><circle cx="300.7" cy="145.8" r="1.0" fill="#e86020" opacity="0.56"/><circle cx="252.8" cy="76.8" r="1.0" fill="#d03020" opacity="0.80"/><circle cx="206.8" cy="80.5" r="1.5" fill="#60c060" opacity="0.85"/><circle cx="262.4" cy="73.2" r="1.1" fill="#f07030" opacity="0.79"/><circle cx="294.5" cy="70.5" r="0.7" fill="#e86020" opacity="0.59"/><circle cx="317.8" cy="115.2" r="1.6" fill="#f8d040" opacity="0.81"/><circle cx="287.1" cy="89.2" r="1.4" fill="#e04080" opacity="0.57"/><circle cx="307.8" cy="94.4" r="1.4" fill="#f8d040" opacity="0.61"/><circle cx="315.8" cy="114.1" r="1.2" fill="#d03020" opacity="0.61"/><circle cx="245.9" cy="87.1" r="1.0" fill="#e04080" opacity="0.81"/><circle cx="307.7" cy="84.2" r="1.4" fill="#e86020" opacity="0.85"/><circle cx="207.7" cy="150.4" r="1.6" fill="#ffe080" opacity="0.75"/><circle cx="270.4" cy="152.7" r="0.7" fill="#d03020" opacity="0.78"/><circle cx="248.5" cy="144.6" r="0.9" fill="#60c060" opacity="0.76"/><circle cx="244.5" cy="141.4" r="1.0" fill="#f8d040" opacity="0.78"/><circle cx="315.0" cy="96.5" r="1.1" fill="#e04080" opacity="0.79"/><circle cx="318.1" cy="124.2" r="1.3" fill="#60c060" opacity="0.83"/><circle cx="290.2" cy="89.3" r="0.9" fill="#f07030" opacity="0.69"/><circle cx="245.0" cy="72.6" r="1.1" fill="#f0a030" opacity="0.51"/><circle cx="202.3" cy="102.1" r="0.7" fill="#60c060" opacity="0.74"/><circle cx="250.8" cy="96.9" r="0.7" fill="#60c060" opacity="0.78"/><circle cx="258.0" cy="80.9" r="1.5" fill="#40a0e0" opacity="0.82"/><circle cx="255.2" cy="74.1" r="0.7" fill="#e04080" opacity="0.68"/><circle cx="233.2" cy="69.1" r="1.2" fill="#d03020" opacity="0.90"/><circle cx="202.0" cy="73.9" r="0.6" fill="#f8d040" opacity="0.61"/><circle cx="208.9" cy="142.8" r="0.6" fill="#d03020" opacity="0.80"/><circle cx="225.3" cy="107.7" r="1.1" fill="#d03020" opacity="0.79"/><circle cx="209.5" cy="128.1" r="1.6" fill="#ffe080" opacity="0.82"/><circle cx="202.7" cy="149.1" r="1.3" fill="#ffe080" opacity="0.54"/><circle cx="279.4" cy="84.8" r="1.6" fill="#e04080" opacity="0.60"/><circle cx="206.6" cy="100.2" r="1.3" fill="#e04080" opacity="0.82"/><circle cx="277.8" cy="160.7" r="0.8" fill="#d03020" opacity="0.51"/><circle cx="232.7" cy="90.7" r="1.3" fill="#f8d040" opacity="0.84"/><circle cx="240.6" cy="152.5" r="0.9" fill="#40a0e0" opacity="0.67"/><circle cx="302.5" cy="156.5" r="1.6" fill="#d03020" opacity="0.71"/>
<path d="M232 124 C250 102 285 98 300 122 C285 145 250 146 232 124Z" fill="#3a5a80"/>
<path d="M238 118 C255 100 282 98 296 116 C282 132 255 134 238 118Z" fill="#efe2dc"/>
<circle cx="268" cy="116" r="13" fill="#2f8fd0"/><circle cx="269" cy="114" r="6.5" fill="#1a1010"/><circle cx="272" cy="111" r="2" fill="#fff"/>
<path d="M236 116 C255 96 284 94 298 114" stroke="#2a6a9a" stroke-width="3" fill="none"/>
</svg>
<div class="t" style="left:3365px;top:520px;font-size:20px;color:#000000;font-weight:bold;transform:scaleX(0.967);">Set up libraries your way</div>
<div class="t" style="left:3365px;top:570px;font-size:19px;color:#1a1a1a;font-weight:normal;transform:scaleX(1.02);">Use custom groups to organize</div>
<div class="t" style="left:3365px;top:592px;font-size:19px;color:#1a1a1a;font-weight:normal;transform:scaleX(1.02);clip-path:inset(0 0 5px 0);">items for faster, easier access.</div>
<div class="a" style="left:3673px;top:586px;width:17px;height:22px;background:#535353;"></div>
<div class="a" style="left:3345px;top:607px;width:345px;height:4px;background:#2b2b2b;"></div>
<div class="a" style="left:3335px;top:609px;width:362px;height:12px;background:#535353;box-sizing:border-box;border-top:2px solid #222;"></div>
<div class="a" style="left:3495px;top:611px;width:1px;height:7px;background:#6a6a6a;"></div>
<div class="a" style="left:3498px;top:611px;width:1px;height:7px;background:#6a6a6a;"></div>
<div class="a" style="left:3501px;top:611px;width:1px;height:7px;background:#6a6a6a;"></div>
<div class="a" style="left:3504px;top:611px;width:1px;height:7px;background:#6a6a6a;"></div>
<div class="a" style="left:3507px;top:611px;width:1px;height:7px;background:#6a6a6a;"></div>
<div class="a" style="left:3510px;top:611px;width:1px;height:7px;background:#6a6a6a;"></div>
<div class="a" style="left:3513px;top:611px;width:1px;height:7px;background:#6a6a6a;"></div>
<div class="a" style="left:3516px;top:611px;width:1px;height:7px;background:#6a6a6a;"></div>
<div class="a" style="left:3519px;top:611px;width:1px;height:7px;background:#6a6a6a;"></div>
<div class="a" style="left:3272px;top:977px;width:425px;height:42px;background:#424242;"></div>
<div class="t" style="left:3288px;top:990px;font-size:17px;color:#a6a6a6;font-weight:bold;transform:scaleX(0.89);">Character</div>
<div class="a" style="left:3369px;top:977px;width:1px;height:42px;background:#3b3b3b;"></div>
<div class="a" style="left:3370px;top:977px;width:99px;height:42px;background:#535353;"></div>
<div class="t" style="left:3386px;top:990px;font-size:17px;color:#f2f2f2;font-weight:bold;transform:scaleX(0.89);">Paragraph</div>
<svg style="left:3670px;top:992px" width="17" height="13"><path d="M0 1.5h16M0 4.5h16M0 7.5h16M0 10.5h16" stroke="#d8d8d8" stroke-width="1.4"/></svg>
<div class="a" style="left:3294px;top:1038px;width:33px;height:33px;background:#3a3a3a;border-radius:2px;"></div>
<svg style="left:3301px;top:1044px" width="20" height="21"><rect x="0" y="0.0" width="20" height="1.8" fill="#e0e0e0"/><rect x="0" y="3.6" width="14" height="1.8" fill="#e0e0e0"/><rect x="0" y="7.2" width="20" height="1.8" fill="#e0e0e0"/><rect x="0" y="10.8" width="14" height="1.8" fill="#e0e0e0"/><rect x="0" y="14.4" width="20" height="1.8" fill="#e0e0e0"/><rect x="0" y="18.0" width="14" height="1.8" fill="#e0e0e0"/></svg>
<svg style="left:3336px;top:1044px" width="20" height="21"><rect x="0.0" y="0.0" width="20" height="1.8" fill="#e0e0e0"/><rect x="3.0" y="3.6" width="14" height="1.8" fill="#e0e0e0"/><rect x="0.0" y="7.2" width="20" height="1.8" fill="#e0e0e0"/><rect x="3.0" y="10.8" width="14" height="1.8" fill="#e0e0e0"/><rect x="0.0" y="14.4" width="20" height="1.8" fill="#e0e0e0"/><rect x="3.0" y="18.0" width="14" height="1.8" fill="#e0e0e0"/></svg>
<svg style="left:3372px;top:1044px" width="20" height="21"><rect x="0" y="0.0" width="20" height="1.8" fill="#e0e0e0"/><rect x="6" y="3.6" width="14" height="1.8" fill="#e0e0e0"/><rect x="0" y="7.2" width="20" height="1.8" fill="#e0e0e0"/><rect x="6" y="10.8" width="14" height="1.8" fill="#e0e0e0"/><rect x="0" y="14.4" width="20" height="1.8" fill="#e0e0e0"/><rect x="6" y="18.0" width="14" height="1.8" fill="#e0e0e0"/></svg>
<svg style="left:3423px;top:1044px" width="20" height="21"><rect x="0" y="0.0" width="20" height="1.8" fill="#e0e0e0"/><rect x="0" y="3.6" width="20" height="1.8" fill="#e0e0e0"/><rect x="0" y="7.2" width="20" height="1.8" fill="#e0e0e0"/><rect x="0" y="10.8" width="20" height="1.8" fill="#e0e0e0"/><rect x="0" y="14.4" width="20" height="1.8" fill="#e0e0e0"/><rect x="0" y="18.0" width="14" height="1.8" fill="#e0e0e0"/></svg>
<svg style="left:3459px;top:1044px" width="20" height="21"><rect x="0.0" y="0.0" width="20" height="1.8" fill="#e0e0e0"/><rect x="0.0" y="3.6" width="20" height="1.8" fill="#e0e0e0"/><rect x="0.0" y="7.2" width="20" height="1.8" fill="#e0e0e0"/><rect x="0.0" y="10.8" width="20" height="1.8" fill="#e0e0e0"/><rect x="0.0" y="14.4" width="20" height="1.8" fill="#e0e0e0"/><rect x="3.0" y="18.0" width="14" height="1.8" fill="#e0e0e0"/></svg>
<svg style="left:3495px;top:1044px" width="20" height="21"><rect x="0" y="0.0" width="20" height="1.8" fill="#e0e0e0"/><rect x="0" y="3.6" width="20" height="1.8" fill="#e0e0e0"/><rect x="0" y="7.2" width="20" height="1.8" fill="#e0e0e0"/><rect x="0" y="10.8" width="20" height="1.8" fill="#e0e0e0"/><rect x="0" y="14.4" width="20" height="1.8" fill="#e0e0e0"/><rect x="6" y="18.0" width="14" height="1.8" fill="#e0e0e0"/></svg>
<svg style="left:3546px;top:1044px" width="20" height="21"><rect x="0" y="0.0" width="20" height="1.8" fill="#e0e0e0"/><rect x="0" y="3.6" width="20" height="1.8" fill="#e0e0e0"/><rect x="0" y="7.2" width="20" height="1.8" fill="#e0e0e0"/><rect x="0" y="10.8" width="20" height="1.8" fill="#e0e0e0"/><rect x="0" y="14.4" width="20" height="1.8" fill="#e0e0e0"/><rect x="0" y="18.0" width="20" height="1.8" fill="#e0e0e0"/></svg>
<svg style="left:3282px;top:1091px" width="24" height="22"><path d="M0 6h6M4 3l3 3-3 3" fill="none" stroke="#ddd" stroke-width="1.4"/><path d="M9 2v18" stroke="#ddd" stroke-width="1.5"/><path d="M12 3h10M12 7h10M12 11h10M12 15h10M12 19h10" stroke="#ddd" stroke-width="1.5"/></svg>
<svg style="left:3282px;top:1123px" width="24" height="22"><path d="M0 6h6M4 3l3 3-3 3" fill="none" stroke="#ddd" stroke-width="1.4"/><path d="M9 2v18" stroke="#ddd" stroke-width="1.5"/><path d="M12 3h10M12 7h10M12 11h10M12 15h10M12 19h10" stroke="#ddd" stroke-width="1.5"/></svg>
<svg style="left:3282px;top:1162px" width="24" height="22"><path d="M0 6h6M4 3l3 3-3 3" fill="none" stroke="#ddd" stroke-width="1.4"/><path d="M9 2v18" stroke="#ddd" stroke-width="1.5"/><path d="M12 3h10M12 7h10M12 11h10M12 15h10M12 19h10" stroke="#ddd" stroke-width="1.5"/></svg>
<svg style="left:3441px;top:1091px" width="24" height="22"><path d="M0 6h6M4 3l3 3-3 3" fill="none" stroke="#ddd" stroke-width="1.4"/><path d="M9 2v18" stroke="#ddd" stroke-width="1.5"/><path d="M12 3h10M12 7h10M12 11h10M12 15h10M12 19h10" stroke="#ddd" stroke-width="1.5"/></svg>
<svg style="left:3441px;top:1162px" width="24" height="22"><path d="M0 6h6M4 3l3 3-3 3" fill="none" stroke="#ddd" stroke-width="1.4"/><path d="M9 2v18" stroke="#ddd" stroke-width="1.5"/><path d="M12 3h10M12 7h10M12 11h10M12 15h10M12 19h10" stroke="#ddd" stroke-width="1.5"/></svg>
<div class="a" style="left:3317px;top:1089px;width:81px;height:25px;background:#474747;box-sizing:border-box;border:1px solid #3d3d3d;"></div>
<div class="t" style="left:3324px;top:1094px;font-size:16px;color:#dedede;font-weight:normal;transform:scaleX(0.88);">0 pt</div>
<div class="a" style="left:3476px;top:1089px;width:81px;height:25px;background:#474747;box-sizing:border-box;border:1px solid #3d3d3d;"></div>
<div class="t" style="left:3483px;top:1094px;font-size:16px;color:#dedede;font-weight:normal;transform:scaleX(0.88);">0 pt</div>
<div class="a" style="left:3317px;top:1120px;width:81px;height:25px;background:#474747;box-sizing:border-box;border:1px solid #3d3d3d;"></div>
<div class="t" style="left:3324px;top:1125px;font-size:16px;color:#dedede;font-weight:normal;transform:scaleX(0.88);">0 pt</div>
<div class="a" style="left:3317px;top:1159px;width:81px;height:25px;background:#474747;box-sizing:border-box;border:1px solid #3d3d3d;"></div>
<div class="t" style="left:3324px;top:1164px;font-size:16px;color:#dedede;font-weight:normal;transform:scaleX(0.88);">0 pt</div>
<div class="a" style="left:3476px;top:1159px;width:81px;height:25px;background:#474747;box-sizing:border-box;border:1px solid #3d3d3d;"></div>
<div class="t" style="left:3483px;top:1164px;font-size:16px;color:#dedede;font-weight:normal;transform:scaleX(0.88);">0 pt</div>
<div class="a" style="left:3288px;top:1202px;width:15px;height:15px;background:#e6e6e6;border-radius:2px;"></div>
<svg style="left:3290px;top:1204px" width="11" height="11"><path d="M1.5 5.5l3 3 5-7" fill="none" stroke="#333" stroke-width="2"/></svg>
<div class="t" style="left:3310px;top:1201px;font-size:17px;color:#dcdcdc;font-weight:normal;transform:scaleX(0.88);">Hyphenate</div>
<div class="a" style="left:3272px;top:1231px;width:425px;height:3px;background:#2e2e2e;"></div>
<div class="a" style="left:3272px;top:1234px;width:425px;height:42px;background:#424242;"></div>
<div class="a" style="left:3272px;top:1234px;width:101px;height:42px;background:#535353;"></div>
<div class="t" style="left:3288px;top:1247px;font-size:17px;color:#f2f2f2;font-weight:bold;transform:scaleX(0.89);">Properties</div>
<div class="t" style="left:3389px;top:1247px;font-size:17px;color:#a6a6a6;font-weight:bold;transform:scaleX(0.89);">Adjustments</div>
<div class="a" style="left:3489px;top:1234px;width:1px;height:42px;background:#3b3b3b;"></div>
<svg style="left:3670px;top:1249px" width="17" height="13"><path d="M0 1.5h16M0 4.5h16M0 7.5h16M0 10.5h16" stroke="#d8d8d8" stroke-width="1.4"/></svg>
<div class="a" style="left:3288px;top:1287px;width:34px;height:34px;background:#3a3a3a;border-radius:2px;"></div>
<svg style="left:3295px;top:1294px" width="21" height="19"><rect x="1" y="1" width="19" height="17" fill="none" stroke="#ddd" stroke-width="1.6"/><path d="M3 16l5-7 4 4 3-3 4 6z" fill="#ddd"/><circle cx="15" cy="6" r="2" fill="#ddd"/></svg>
<div class="t" style="left:3331px;top:1296px;font-size:17px;color:#d8d8d8;font-weight:normal;transform:scaleX(0.88);">Pixel Layer Properties</div>
<div class="a" style="left:3272px;top:1328px;width:425px;height:2px;background:#474747;"></div>
<div class="a" style="left:3671px;top:1330px;width:20px;height:530px;background:#4e4e4e;"></div>
<div class="t" style="left:3288px;top:1351px;font-size:17px;color:#cfcfcf;font-weight:normal;transform:scaleX(0.88);">W:</div>
<div class="a" style="left:3317px;top:1347px;width:79px;height:25px;background:#474747;box-sizing:border-box;border:1px solid #3d3d3d;"></div>
<div class="t" style="left:3324px;top:1352px;font-size:16px;color:#dedede;font-weight:normal;transform:scaleX(0.88);">2.49 in</div>
<div class="a" style="left:3409px;top:1340px;width:35px;height:38px;background:#3a3a3a;border-radius:2px;"></div>
<svg style="left:3416px;top:1351px" width="22" height="14"><rect x="1" y="2" width="11" height="9" rx="4.5" fill="none" stroke="#ddd" stroke-width="2"/><rect x="10" y="2" width="11" height="9" rx="4.5" fill="none" stroke="#ddd" stroke-width="2"/></svg>
<div class="t" style="left:3460px;top:1351px;font-size:17px;color:#cfcfcf;font-weight:normal;transform:scaleX(0.88);">H:</div>
<div class="a" style="left:3487px;top:1347px;width:79px;height:25px;background:#474747;box-sizing:border-box;border:1px solid #3d3d3d;"></div>
<div class="t" style="left:3494px;top:1352px;font-size:16px;color:#dedede;font-weight:normal;transform:scaleX(0.88);">2.49 in</div>
<div class="t" style="left:3290px;top:1397px;font-size:17px;color:#cfcfcf;font-weight:normal;transform:scaleX(0.88);">X:</div>
<div class="a" style="left:3317px;top:1393px;width:79px;height:25px;background:#474747;box-sizing:border-box;border:1px solid #3d3d3d;"></div>
<div class="t" style="left:3324px;top:1398px;font-size:16px;color:#dedede;font-weight:normal;transform:scaleX(0.88);">7.06 in</div>
<div class="t" style="left:3456px;top:1397px;font-size:17px;color:#cfcfcf;font-weight:normal;transform:scaleX(0.88);">Y:</div>
<div class="a" style="left:3486px;top:1393px;width:79px;height:25px;background:#474747;box-sizing:border-box;border:1px solid #3d3d3d;"></div>
<div class="t" style="left:3493px;top:1398px;font-size:16px;color:#dedede;font-weight:normal;transform:scaleX(0.88);">2.74 in</div>
<div class="a" style="left:3272px;top:1865px;width:425px;height:3px;background:#2e2e2e;"></div>
<div class="a" style="left:3272px;top:1868px;width:425px;height:42px;background:#424242;"></div>
<div class="t" style="left:3288px;top:1881px;font-size:17px;color:#a6a6a6;font-weight:bold;transform:scaleX(0.89);">Channels</div>
<div class="a" style="left:3364px;top:1868px;width:1px;height:42px;background:#3b3b3b;"></div>
<div class="a" style="left:3365px;top:1868px;width:68px;height:42px;background:#535353;"></div>
<div class="t" style="left:3381px;top:1881px;font-size:17px;color:#f2f2f2;font-weight:bold;transform:scaleX(0.89);">Paths</div>
<svg style="left:3670px;top:1883px" width="17" height="13"><path d="M0 1.5h16M0 4.5h16M0 7.5h16M0 10.5h16" stroke="#d8d8d8" stroke-width="1.4"/></svg>
<div class="a" style="left:3272px;top:1913px;width:399px;height:150px;background:#4d4d4d;"></div>
<div class="a" style="left:3272px;top:2064px;width:425px;height:1px;background:#404040;"></div>
<svg style="left:3388px;top:2068px" width="280" height="26">
<circle cx="10" cy="12" r="7.5" fill="#9a9a9a"/>
<circle cx="50" cy="12" r="6.5" fill="none" stroke="#9a9a9a" stroke-width="1.8"/>
<rect x="84" y="5" width="15" height="15" rx="4" fill="none" stroke="#9a9a9a" stroke-width="1.6" stroke-dasharray="2.5 2"/>
<circle cx="131" cy="12" r="8" fill="none" stroke="#e0e0e0" stroke-width="2"/><path d="M131 1v5M131 18v5M120 12h5M137 12h5" stroke="#e0e0e0" stroke-width="2"/>
<rect x="162" y="4" width="20" height="15" fill="#e0e0e0"/><circle cx="172" cy="11.5" r="4.5" fill="#535353"/>
<path d="M209 3h14v17h-10l-4-4z" fill="none" stroke="#e0e0e0" stroke-width="2"/>
<path d="M247 5h16M252 2h6M248 6l1 15h12l1-15M252 9v10M255 9v10M258 9v10" fill="none" stroke="#9a9a9a" stroke-width="1.8"/>
</svg>
<div class="a" style="left:3755px;top:116px;width:1px;height:8px;background:#606060;"></div>
<div class="a" style="left:3758px;top:116px;width:1px;height:8px;background:#606060;"></div>
<div class="a" style="left:3761px;top:116px;width:1px;height:8px;background:#606060;"></div>
<div class="a" style="left:3764px;top:116px;width:1px;height:8px;background:#606060;"></div>
<div class="a" style="left:3767px;top:116px;width:1px;height:8px;background:#606060;"></div>
<div class="a" style="left:3770px;top:116px;width:1px;height:8px;background:#606060;"></div>
<div class="a" style="left:3773px;top:116px;width:1px;height:8px;background:#606060;"></div>
<div class="a" style="left:3776px;top:116px;width:1px;height:8px;background:#606060;"></div>
<div class="a" style="left:3779px;top:116px;width:1px;height:8px;background:#606060;"></div>
<svg style="left:3719px;top:133px" width="18" height="30"><path d="M9 1a8 8 0 0 0-5 14c1 1 2 3 2 5h6c0-2 1-4 2-5A8 8 0 0 0 9 1z" fill="none" stroke="#ddd" stroke-width="1.6"/><path d="M6 22h6v3l-3 3-3-3z" fill="#ddd"/></svg>
<div class="t" style="left:3756px;top:138px;font-size:17px;color:#e8e8e8;font-weight:bold;transform:scaleX(0.89);">Learn</div>
<div class="a" style="left:3708px;top:173px;width:123px;height:33px;background:#3c3c3c;"></div>
<svg style="left:3712px;top:178px" width="28" height="22"><path d="M8 20a7 7 0 0 1 0-14 9 9 0 0 1 17 4 5 5 0 0 1-1 10z" fill="none" stroke="#ddd" stroke-width="2.2"/><path d="M8 16a4 4 0 0 1 0-7 6 6 0 0 1 11 3" fill="none" stroke="#ddd" stroke-width="2"/></svg>
<div class="t" style="left:3756px;top:181px;font-size:17px;color:#e8e8e8;font-weight:bold;transform:scaleX(0.89);">Libraries</div>
<div class="a" style="left:3700px;top:214px;width:140px;height:1px;background:#474747;"></div>
<div class="a" style="left:3700px;top:215px;width:140px;height:1885px;background:#535353;"></div>
<div class="a" style="left:0px;top:2100px;width:3840px;height:60px;background:linear-gradient(90deg,#202a22 0%,#19221a 40%,#131a0c 75%,#141a0e 100%);"></div>
<svg style="left:24px;top:2117px" width="26" height="26"><path d="M0 3.5l10-1.5v10H0zM11 1.8L25 0v12H11zM0 13h10v10L0 21.5zM11 13h14v12l-14-1.8z" fill="#ffffff"/></svg>
<svg style="left:95px;top:2117px" width="26" height="26"><path d="M1 1v3h16V1M1 25v-3h16v3" fill="none" stroke="#fff" stroke-width="1.5"/><rect x="1" y="7" width="16" height="12" fill="none" stroke="#fff" stroke-width="1.5"/><path d="M23 1v24" stroke="#fff" stroke-width="1.5"/><rect x="21.5" y="10" width="3" height="4" fill="#fff"/></svg>
<div class="a" style="left:599px;top:2100px;width:73px;height:60px;background:#3d4740;"></div>
<svg style="left:167px;top:2112px" width="36" height="36"><path d="M2 6h12l3 3h17v22H2z" fill="#f5c94a"/><path d="M2 12h32v19H2z" fill="#ffe08a"/><path d="M10 22h16v10H10z" fill="#2f8fdf"/><path d="M13 26h10v6H13z" fill="#5ab0f0"/></svg>
<svg style="left:242px;top:2112px" width="36" height="36"><circle cx="18" cy="18" r="16" fill="#db4437"/><path d="M18 18L4.1 26A16 16 0 0 0 18 34z" fill="#0f9d58"/><path d="M18 18L4.1 26A16 16 0 0 1 4 10z" fill="#0f9d58"/><path d="M18 18h16a16 16 0 0 1-16 16z" fill="#ffcd40"/><path d="M18 18L34 18A16 16 0 0 0 30 7z" fill="#ffcd40"/><circle cx="18" cy="18" r="7.5" fill="#fff"/><circle cx="18" cy="18" r="5.8" fill="#4285f4"/></svg>
<svg style="left:317px;top:2112px" width="36" height="36"><circle cx="18" cy="19" r="15" fill="#ff6d1a"/><circle cx="18" cy="19" r="10" fill="#6a2ad0"/><path d="M8 10c4-6 16-8 22 0 4 6 3 14-2 18 2-6-1-12-6-12 1 4-2 7-6 6-3-1-4-4-2-7-5 1-7 4-6 8-2-4-2-9 0-13z" fill="#ff9a1a"/><path d="M24 2c3 2 5 5 5 9l-4-3z" fill="#ffd030"/></svg>
<svg style="left:392px;top:2112px" width="36" height="36"><rect x="12" y="4" width="22" height="26" rx="2" fill="#28a8ea"/><rect x="12" y="17" width="22" height="14" fill="#0364b8"/><rect x="2" y="9" width="18" height="18" rx="2" fill="#0a5fb8"/><text x="11" y="24" text-anchor="middle" font-size="14" font-weight="bold" font-family="Liberation Sans" fill="#fff">o</text></svg>
<svg style="left:467px;top:2112px" width="36" height="36"><rect x="1.5" y="1.5" width="33" height="31" fill="#49021f" stroke="#ff3366" stroke-width="2.5"/><text x="18" y="25" text-anchor="middle" font-size="19" font-family="Liberation Sans" fill="#ff3366">Id</text></svg>
<svg style="left:542px;top:2112px" width="36" height="36"><rect x="1.5" y="1.5" width="33" height="31" fill="#261300" stroke="#ff9a00" stroke-width="2.5"/><text x="18" y="25" text-anchor="middle" font-size="19" font-family="Liberation Sans" fill="#ff9a00">Ai</text></svg>
<svg style="left:617px;top:2112px" width="36" height="36"><rect x="1.5" y="1.5" width="33" height="31" fill="#001e36" stroke="#31a8ff" stroke-width="2.5"/><text x="18" y="25" text-anchor="middle" font-size="19" font-family="Liberation Sans" fill="#31a8ff">Ps</text></svg>
<svg style="left:692px;top:2112px" width="36" height="36"><rect x="1.5" y="1.5" width="33" height="31" fill="#2a0038" stroke="#e479ff" stroke-width="2.5"/><text x="18" y="25" text-anchor="middle" font-size="19" font-family="Liberation Sans" fill="#e479ff">Pr</text></svg>
<svg style="left:767px;top:2112px" width="36" height="36"><rect x="1.5" y="1.5" width="33" height="31" fill="#1e1a00" stroke="#e6b400" stroke-width="2.5"/><text x="18" y="25" text-anchor="middle" font-size="19" font-family="Liberation Sans" fill="#e6b400">Br</text></svg>
<svg style="left:842px;top:2112px" width="36" height="36"><circle cx="20" cy="18" r="15" fill="#ed6c47"/><path d="M20 3a15 15 0 0 1 15 15H20z" fill="#ff8f6b"/><rect x="3" y="10" width="16" height="16" rx="2" fill="#c43e1c"/><text x="11" y="23" text-anchor="middle" font-size="12" font-weight="bold" font-family="Liberation Sans" fill="#fff">P</text></svg>
<svg style="left:917px;top:2112px" width="36" height="36"><rect x="1.5" y="1.5" width="33" height="31" fill="#1a0000" stroke="#ee1c1c" stroke-width="2.5"/><path d="M8 27c4-8 10-18 10-20s-2-1-1 3c1 5 5 10 11 13-4 0-10 1-14 3-3 2-6 3-6 1z" fill="none" stroke="#fff" stroke-width="1.4"/></svg>
<svg style="left:992px;top:2112px" width="36" height="36"><rect x="10" y="4" width="24" height="28" rx="2" fill="#41a5ee"/><rect x="10" y="14" width="24" height="9" fill="#2b7cd3"/><rect x="10" y="23" width="24" height="9" fill="#185abd"/><rect x="2" y="10" width="18" height="16" rx="2" fill="#185abd"/><text x="11" y="23" text-anchor="middle" font-size="12" font-weight="bold" font-family="Liberation Sans" fill="#fff">W</text></svg>
<svg style="left:1067px;top:2112px" width="36" height="36"><rect x="6" y="1" width="24" height="34" fill="none" stroke="#e0e0e0" stroke-width="2"/><rect x="9" y="4" width="18" height="5" fill="#e0e0e0"/><path d="M9 12h18v20H9zM13.5 12v20M18 12v20M22.5 12v20M9 17h18M9 22h18M9 27h18" fill="none" stroke="#e0e0e0" stroke-width="1.3"/></svg>
<div class="a" style="left:155px;top:2157px;width:60px;height:3px;background:#76b9ed;"></div>
<div class="a" style="left:230px;top:2157px;width:60px;height:3px;background:#76b9ed;"></div>
<div class="a" style="left:305px;top:2157px;width:60px;height:3px;background:#76b9ed;"></div>
<div class="a" style="left:380px;top:2157px;width:60px;height:3px;background:#76b9ed;"></div>
<div class="a" style="left:455px;top:2157px;width:60px;height:3px;background:#76b9ed;"></div>
<div class="a" style="left:530px;top:2157px;width:60px;height:3px;background:#76b9ed;"></div>
<div class="a" style="left:599px;top:2157px;width:73px;height:3px;background:#76b9ed;"></div>
<div class="a" style="left:905px;top:2157px;width:60px;height:3px;background:#76b9ed;"></div>
<div class="a" style="left:980px;top:2157px;width:60px;height:3px;background:#76b9ed;"></div>
<div class="a" style="left:1055px;top:2157px;width:60px;height:3px;background:#76b9ed;"></div>
<svg style="left:3491px;top:2123px" width="20" height="12"><path d="M1 11l9-9 9 9" fill="none" stroke="#fff" stroke-width="1.6"/></svg>
<svg style="left:3526px;top:2118px" width="26" height="22"><rect x="1" y="3" width="23" height="14" fill="none" stroke="#fff" stroke-width="1.5"/><path d="M12 17v4M7 21h11M1 1h7v7H1z" fill="none" stroke="#fff" stroke-width="1.5"/></svg>
<svg style="left:3562px;top:2118px" width="24" height="22"><path d="M1 7h5l6-5v18l-6-5H1z" fill="none" stroke="#fff" stroke-width="1.5"/><path d="M15 7c2 2 2 6 0 8M18 4c4 4 4 10 0 14" fill="none" stroke="#fff" stroke-width="1.5"/></svg>
<div class="t" style="left:3602px;top:2121px;font-size:18px;color:#ffffff;font-weight:normal;">ENG</div>
<div class="t" style="left:3682px;top:2107px;font-size:18px;color:#ffffff;font-weight:normal;">14:30</div>
<div class="t" style="left:3655px;top:2136px;font-size:18px;color:#ffffff;font-weight:normal;">26/07/2019</div>
<svg style="left:3776px;top:2118px" width="26" height="24"><path d="M1 1h22v16H9l-5 5v-5H1z" fill="#fff"/><path d="M5 6h14M5 9h14M5 12h14" stroke="#141a0e" stroke-width="1.2"/></svg>
<div class="a" style="left:3787px;top:2129px;width:27px;height:27px;background:#333333;border-radius:50%;box-sizing:border-box;border:1px solid #777;"></div>
<div class="t" style="left:3791px;top:2135px;font-size:17px;color:#ffffff;font-weight:bold;transform:scaleX(0.95);">20</div>
<div class="a" style="left:3836px;top:2100px;width:1px;height:60px;background:#555;"></div>
</body></html>
